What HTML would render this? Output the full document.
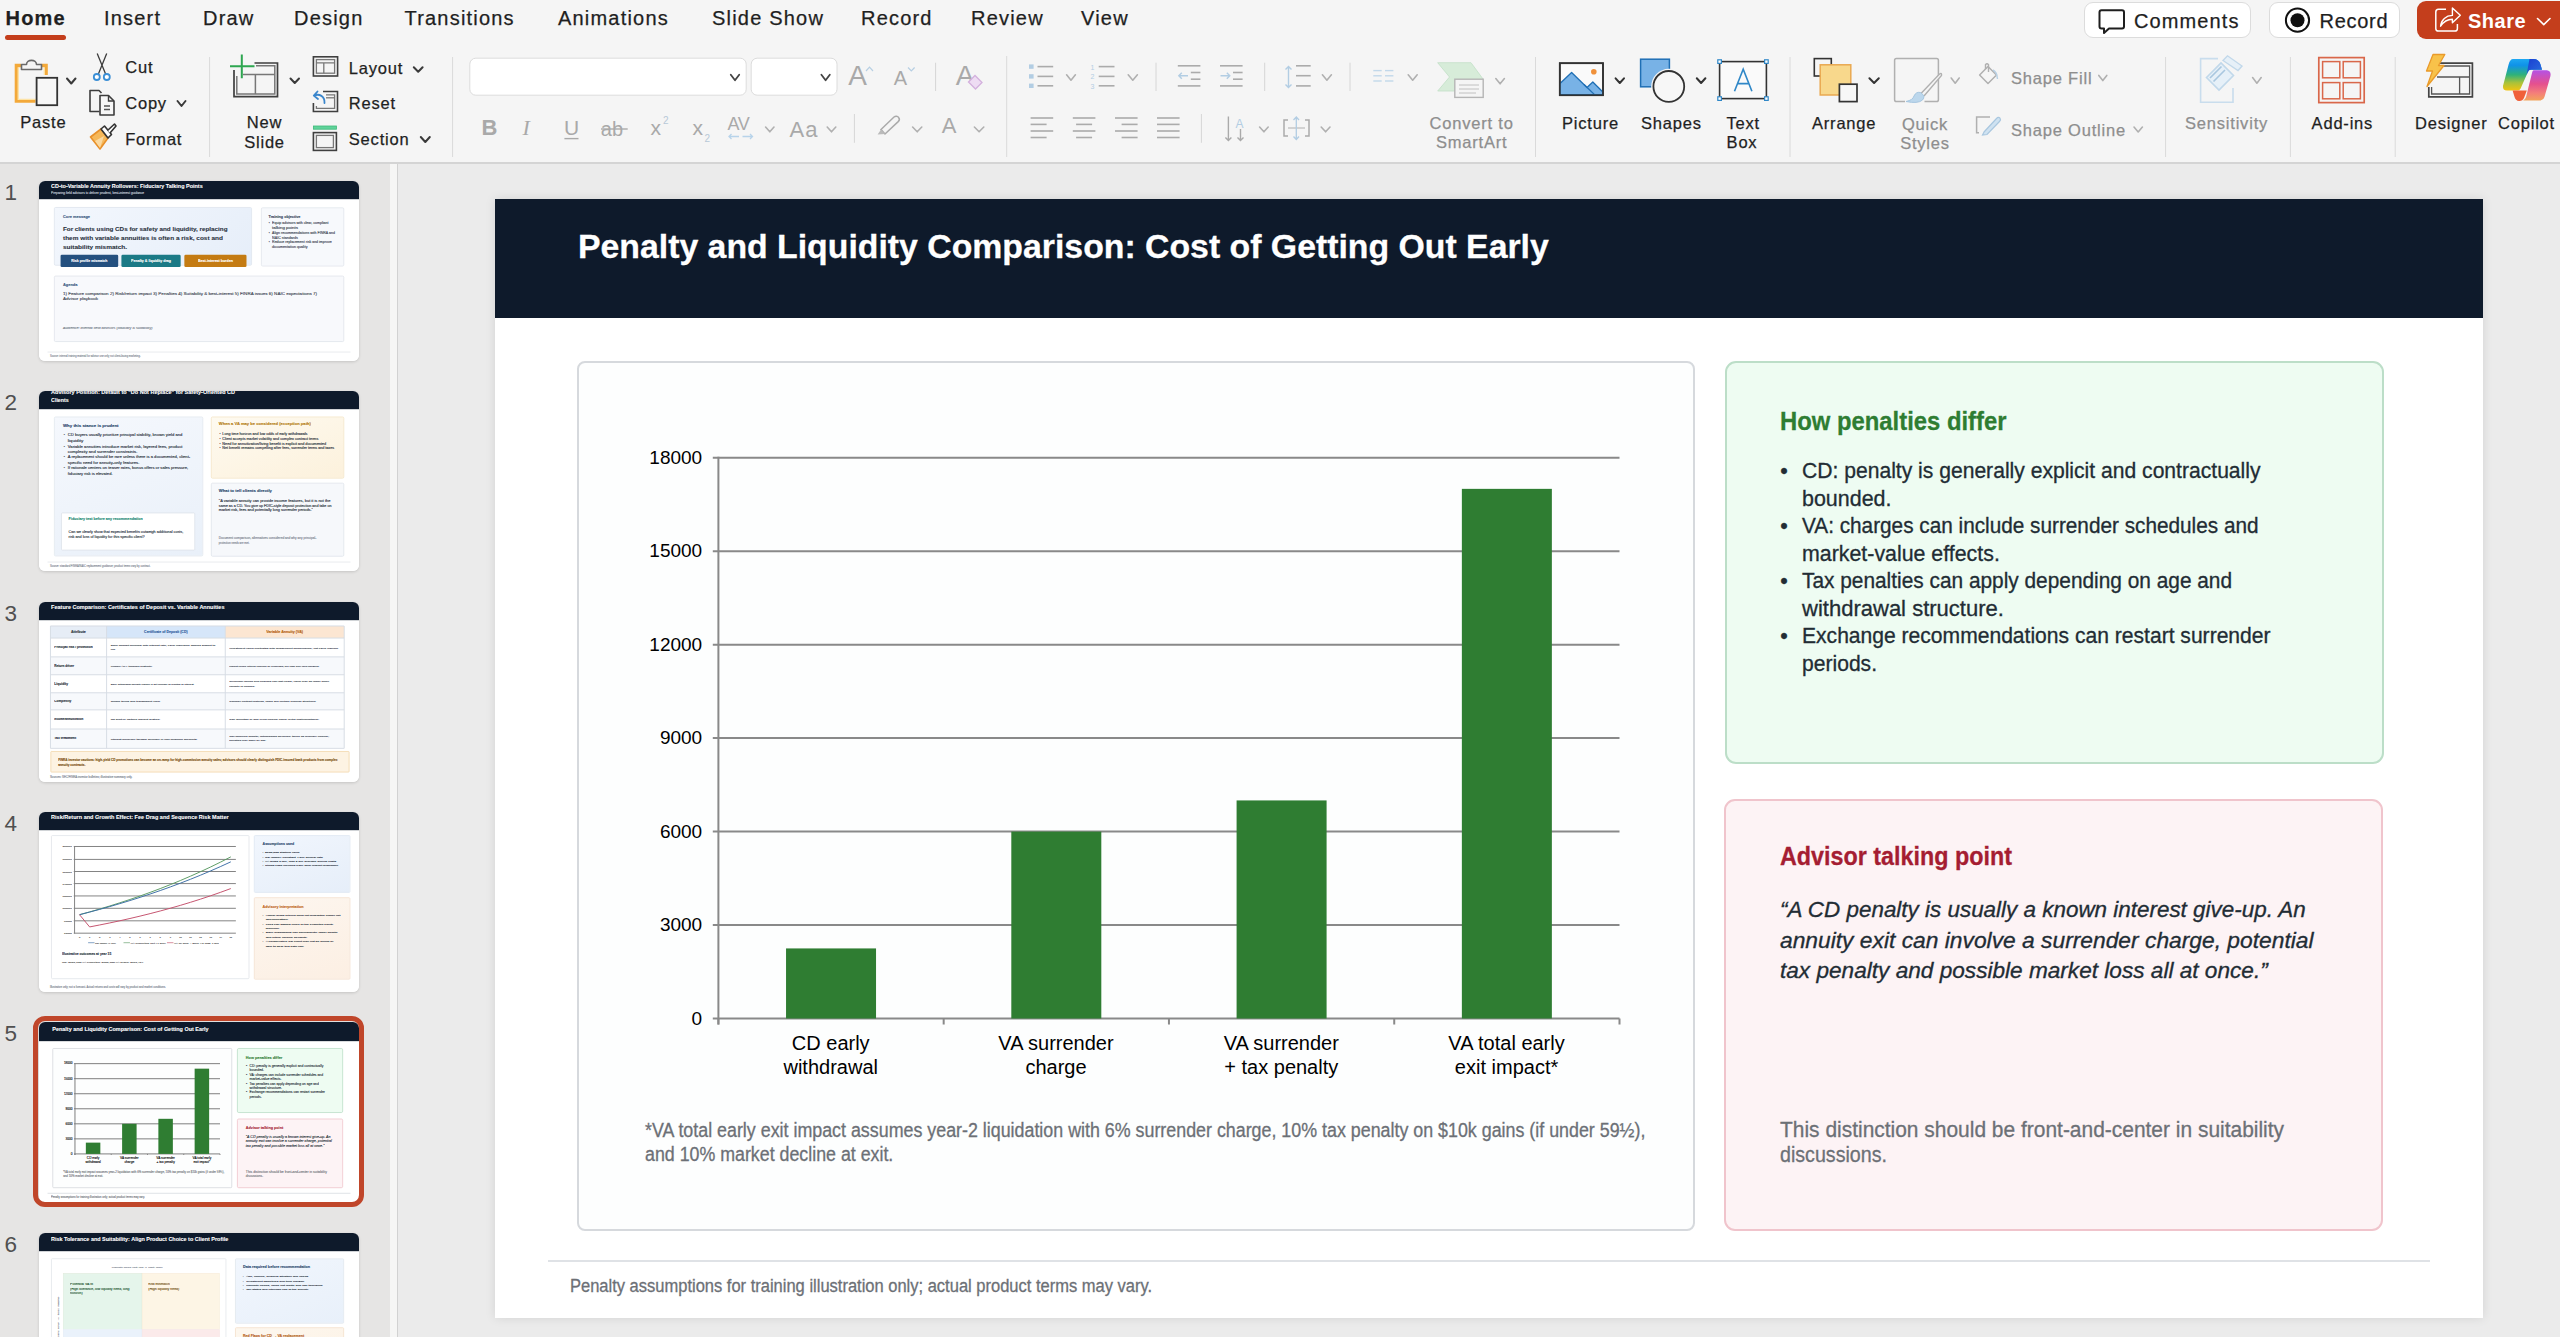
<!DOCTYPE html><html><head><meta charset="utf-8"><style>
*{margin:0;padding:0;box-sizing:content-box}
html,body{width:2560px;height:1337px;overflow:hidden;background:#ebebeb;font-family:"Liberation Sans",sans-serif}
.a{position:absolute}
.t{position:absolute;white-space:nowrap;font-family:"Liberation Sans",sans-serif}
.slide{position:absolute;width:1988px;height:1119px;background:#fff;overflow:hidden}
.th .t{-webkit-text-stroke:0.6px currentColor}
.rb{-webkit-text-stroke:0.25px currentColor}
.cal{-webkit-text-stroke:0.3px currentColor}
</style></head><body><div class="a" style="left:0px;top:0px;width:2560px;height:162px;background:#f5f5f5;"></div><div class="a" style="left:0px;top:162px;width:2560px;height:1.5px;background:#d4d4d4;"></div><div class="t rb" style="left:5.50px;top:7.87px;font-size:20px;line-height:20px;color:#1f1f1f;font-weight:700;letter-spacing:1.2px;">Home</div><div class="t rb" style="left:104.00px;top:7.87px;font-size:20px;line-height:20px;color:#1f1f1f;letter-spacing:1.2px;">Insert</div><div class="t rb" style="left:203.00px;top:7.87px;font-size:20px;line-height:20px;color:#1f1f1f;letter-spacing:1.2px;">Draw</div><div class="t rb" style="left:294.00px;top:7.87px;font-size:20px;line-height:20px;color:#1f1f1f;letter-spacing:1.2px;">Design</div><div class="t rb" style="left:404.50px;top:7.87px;font-size:20px;line-height:20px;color:#1f1f1f;letter-spacing:1.2px;">Transitions</div><div class="t rb" style="left:558.00px;top:7.87px;font-size:20px;line-height:20px;color:#1f1f1f;letter-spacing:1.2px;">Animations</div><div class="t rb" style="left:712.00px;top:7.87px;font-size:20px;line-height:20px;color:#1f1f1f;letter-spacing:1.2px;">Slide Show</div><div class="t rb" style="left:861.00px;top:7.87px;font-size:20px;line-height:20px;color:#1f1f1f;letter-spacing:1.2px;">Record</div><div class="t rb" style="left:971.00px;top:7.87px;font-size:20px;line-height:20px;color:#1f1f1f;letter-spacing:1.2px;">Review</div><div class="t rb" style="left:1081.00px;top:7.87px;font-size:20px;line-height:20px;color:#1f1f1f;letter-spacing:1.2px;">View</div><div class="a" style="left:5px;top:35px;width:61px;height:4.5px;background:#c43e1c;border-radius:3px;"></div><div class="t rb" style="left:20.20px;top:114.43px;font-size:16.5px;line-height:16.5px;color:#1f1f1f;letter-spacing:0.8px;">Paste</div><div class="t rb" style="left:125.20px;top:59.43px;font-size:16.5px;line-height:16.5px;color:#1f1f1f;letter-spacing:0.8px;">Cut</div><div class="t rb" style="left:125.20px;top:94.73px;font-size:16.5px;line-height:16.5px;color:#1f1f1f;letter-spacing:0.8px;">Copy</div><div class="t rb" style="left:125.20px;top:130.83px;font-size:16.5px;line-height:16.5px;color:#1f1f1f;letter-spacing:0.8px;">Format</div><div class="t rb" style="left:348.80px;top:59.63px;font-size:16.5px;line-height:16.5px;color:#1f1f1f;letter-spacing:0.8px;">Layout</div><div class="t rb" style="left:348.80px;top:95.03px;font-size:16.5px;line-height:16.5px;color:#1f1f1f;letter-spacing:0.8px;">Reset</div><div class="t rb" style="left:348.80px;top:131.03px;font-size:16.5px;line-height:16.5px;color:#1f1f1f;letter-spacing:0.8px;">Section</div><div class="t rb" style="left:1562.00px;top:115.03px;font-size:16.5px;line-height:16.5px;color:#1f1f1f;letter-spacing:0.8px;">Picture</div><div class="t rb" style="left:1641.00px;top:115.03px;font-size:16.5px;line-height:16.5px;color:#1f1f1f;letter-spacing:0.8px;">Shapes</div><div class="t rb" style="left:1726.50px;top:115.03px;font-size:16.5px;line-height:16.5px;color:#1f1f1f;letter-spacing:0.8px;">Text</div><div class="t rb" style="left:1812.00px;top:115.03px;font-size:16.5px;line-height:16.5px;color:#1f1f1f;letter-spacing:0.8px;">Arrange</div><div class="t rb" style="left:2311.60px;top:115.03px;font-size:16.5px;line-height:16.5px;color:#1f1f1f;letter-spacing:0.8px;">Add-ins</div><div class="t rb" style="left:2415.00px;top:115.03px;font-size:16.5px;line-height:16.5px;color:#1f1f1f;letter-spacing:0.8px;">Designer</div><div class="t rb" style="left:2498.00px;top:115.03px;font-size:16.5px;line-height:16.5px;color:#1f1f1f;letter-spacing:0.8px;">Copilot</div><div class="t rb" style="left:264.50px;top:114.33px;font-size:16.5px;line-height:16.5px;color:#1f1f1f;letter-spacing:0.8px;transform:translateX(-50%);">New</div><div class="t rb" style="left:264.50px;top:133.63px;font-size:16.5px;line-height:16.5px;color:#1f1f1f;letter-spacing:0.8px;transform:translateX(-50%);">Slide</div><div class="t rb" style="left:1742.00px;top:134.03px;font-size:16.5px;line-height:16.5px;color:#1f1f1f;letter-spacing:0.8px;transform:translateX(-50%);">Box</div><div class="t rb" style="left:1429.50px;top:115.03px;font-size:16.5px;line-height:16.5px;color:#8e8e8e;letter-spacing:0.8px;">Convert to</div><div class="t rb" style="left:1436.00px;top:134.03px;font-size:16.5px;line-height:16.5px;color:#8e8e8e;letter-spacing:0.8px;">SmartArt</div><div class="t rb" style="left:2185.00px;top:115.03px;font-size:16.5px;line-height:16.5px;color:#8e8e8e;letter-spacing:0.8px;">Sensitivity</div><div class="t rb" style="left:2011.00px;top:69.73px;font-size:16.5px;line-height:16.5px;color:#8e8e8e;letter-spacing:0.8px;">Shape Fill</div><div class="t rb" style="left:2011.00px;top:121.53px;font-size:16.5px;line-height:16.5px;color:#8e8e8e;letter-spacing:0.8px;">Shape Outline</div><div class="t rb" style="left:1925.00px;top:115.53px;font-size:16.5px;line-height:16.5px;color:#8e8e8e;letter-spacing:0.8px;transform:translateX(-50%);">Quick</div><div class="t rb" style="left:1925.00px;top:134.53px;font-size:16.5px;line-height:16.5px;color:#8e8e8e;letter-spacing:0.8px;transform:translateX(-50%);">Styles</div><div class="a" style="left:2084px;top:2px;width:167px;height:36px;box-sizing:border-box;border:1.5px solid #dcdcdc;border-radius:9px;background:#fff;"></div><div class="t rb" style="left:2134.00px;top:11.07px;font-size:20px;line-height:20px;color:#1f1f1f;letter-spacing:1.1px;">Comments</div><div class="a" style="left:2269px;top:2px;width:131px;height:36px;box-sizing:border-box;border:1.5px solid #dcdcdc;border-radius:9px;background:#fff;"></div><div class="t rb" style="left:2319.60px;top:11.07px;font-size:20px;line-height:20px;color:#1f1f1f;letter-spacing:0.7px;">Record</div><div class="a" style="left:2417px;top:1px;width:160px;height:38px;border-radius:9px;background:#c43e1c;"></div><div class="t " style="left:2468.00px;top:11.07px;font-size:20px;line-height:20px;color:#ffffff;font-weight:600;letter-spacing:0.5px;">Share</div><svg class="a" style="left:0;top:0" width="2560" height="162"><path d="M21,65.5 H16.5 V101 H35.5 M41.5,65.5 H46 V75" fill="none" stroke="#f3a93a" stroke-width="3.6"/><path d="M18.2,67.2 V99.3 H35.5 M44.3,67.2 V75" fill="none" stroke="#fde3a6" stroke-width="1.3"/><path d="M21.5,64.5 V69.5 H41.5 V64.5 H36.5 C36.5,59 26.5,59 26.5,64.5 Z" fill="#f5f5f5" stroke="#6a6a6a" stroke-width="1.6" stroke-linejoin="round"/><rect x="36.6" y="77.8" width="20.6" height="27.4" fill="#f7f7f7" stroke="#333" stroke-width="1.8"/><polyline points="67,78.5 71.25,83.5 75.5,78.5" fill="none" stroke="#3a3a3a" stroke-width="2" stroke-linecap="round" stroke-linejoin="round"/><path d="M98.3,74.2 L106.7,53.6 M105.7,74.2 L97.2,53.6" fill="none" stroke="#3c3c3c" stroke-width="1.3"/><circle cx="96.8" cy="77" r="3" fill="#fff" stroke="#3b8fd6" stroke-width="1.8"/><circle cx="106.8" cy="77" r="3" fill="#fff" stroke="#3b8fd6" stroke-width="1.8"/><path d="M99.5,111.5 H90 V90.5 H99 L101.5,93" fill="none" stroke="#3c3c3c" stroke-width="1.6" stroke-linejoin="round"/><path d="M100,95.5 H108.5 L114,101 V115 H100 Z" fill="#f7f7f7" stroke="#3c3c3c" stroke-width="1.6" stroke-linejoin="round"/><path d="M108.5,95.5 V101 H114" fill="none" stroke="#3c3c3c" stroke-width="1.4"/><path d="M104,106 H110 M104,109.5 H110" stroke="#555" stroke-width="1.3"/><polyline points="177.5,101 181.5,106 185.5,101" fill="none" stroke="#3a3a3a" stroke-width="2" stroke-linecap="round" stroke-linejoin="round"/><path d="M90.5,137 L101,129 L108,138 L100,149 Z" fill="#f6b85a" stroke="#e8902a" stroke-width="1.6" stroke-linejoin="round"/><path d="M95,141 L104,136 L100,148 Z" fill="#fbd9a0"/><path d="M101,129 L104.5,126 L111.5,134.5 L108,138 Z" fill="#fff" stroke="#333" stroke-width="1.6" stroke-linejoin="round"/><path d="M107.5,130.5 L114.5,124 L116,126 L110,133" fill="#fff" stroke="#333" stroke-width="1.6" stroke-linejoin="round"/><line x1="209.6" y1="57" x2="209.6" y2="157" stroke="#dadada" stroke-width="1"/><path d="M254.5,63 H277.5 V96.6 H234 V70" fill="none" stroke="#3f3f3f" stroke-width="1.7"/><path d="M256,65.8 H274.8 V94 H236.8 V76" fill="none" stroke="#777" stroke-width="1.5"/><path d="M243,74.5 H274.8 M255.4,74.5 V94" fill="none" stroke="#777" stroke-width="1.5"/><path d="M230,66.3 H254.5 M241.8,54.6 V78.2" fill="none" stroke="#2ea650" stroke-width="2"/><polyline points="290.5,78.5 294.75,83 299,78.5" fill="none" stroke="#3a3a3a" stroke-width="2" stroke-linecap="round" stroke-linejoin="round"/><rect x="313.4" y="56.8" width="24.2" height="19.2" fill="none" stroke="#3f3f3f" stroke-width="1.6"/><rect x="316.4" y="59.6" width="18.2" height="13.6" fill="none" stroke="#777" stroke-width="1.3"/><path d="M316.4,62.8 H334.6 M323.8,62.8 V73.2" stroke="#777" stroke-width="1.3"/><polyline points="413.8,67.3 418.20000000000005,71.8 422.6,67.3" fill="none" stroke="#3a3a3a" stroke-width="2" stroke-linecap="round" stroke-linejoin="round"/><path d="M323,91.5 H337.5 V111.5 H313.4 V103" fill="none" stroke="#3f3f3f" stroke-width="1.6"/><path d="M326,94.8 H334.6 V108.4 H316.4 V106" fill="none" stroke="#777" stroke-width="1.3"/><path d="M326,97.8 H334.6" stroke="#777" stroke-width="1.3"/><path d="M324.5,103 C325,96 319,93.5 314.5,95.5 M317.5,91.5 L313.8,95.6 L318,99" fill="none" stroke="#3a86cc" stroke-width="1.8" stroke-linecap="round" stroke-linejoin="round"/><rect x="313.4" y="126" width="23" height="3.2" fill="#5fd39a" stroke="#3cb878" stroke-width="0.8"/><rect x="313.4" y="132.6" width="23" height="17.8" fill="none" stroke="#3f3f3f" stroke-width="1.6"/><rect x="316.4" y="135.4" width="17" height="12.2" fill="none" stroke="#777" stroke-width="1.3"/><polyline points="420.8,137 425.3,142 429.8,137" fill="none" stroke="#3a3a3a" stroke-width="2" stroke-linecap="round" stroke-linejoin="round"/><line x1="452.6" y1="57" x2="452.6" y2="157" stroke="#dadada" stroke-width="1"/><rect x="469.8" y="58.2" width="276.4" height="37" rx="6" fill="#fff" stroke="#dcdcdc" stroke-width="1"/><polyline points="730.8,74.8 735.0,80.2 739.2,74.8" fill="none" stroke="#444" stroke-width="1.8" stroke-linecap="round" stroke-linejoin="round"/><rect x="751.2" y="58.2" width="85.8" height="37" rx="6" fill="#fff" stroke="#dcdcdc" stroke-width="1"/><polyline points="821.4,74.8 825.5999999999999,80.2 829.8,74.8" fill="none" stroke="#444" stroke-width="1.8" stroke-linecap="round" stroke-linejoin="round"/><text x="848.2" y="85" font-family="Liberation Sans" font-size="28" fill="#a9a9a9" font-weight="400" text-anchor="start" >A</text><polyline points="866,71 869.5,67.2 873,71" fill="none" stroke="#b7cfe3" stroke-width="1.2"/><text x="893.8" y="85" font-family="Liberation Sans" font-size="20" fill="#a9a9a9" font-weight="400" text-anchor="start" >A</text><polyline points="908,67.5 911.3,71 914.6,67.5" fill="none" stroke="#b7cfe3" stroke-width="1.2"/><line x1="935.6" y1="62.7" x2="935.6" y2="91" stroke="#d6d6d6" stroke-width="1"/><text x="955.8" y="85" font-family="Liberation Sans" font-size="28" fill="#a9a9a9" font-weight="400" text-anchor="start" >A</text><path d="M968.5,82 L975,75.5 L982,82.5 L975.5,89 Z" fill="#eedcf3" stroke="#d3b0dd" stroke-width="1.3"/><line x1="1006.7" y1="56" x2="1006.7" y2="157" stroke="#dadada" stroke-width="1"/><text x="481.5" y="135.4" font-family="Liberation Sans" font-size="22" fill="#a9a9a9" font-weight="700" text-anchor="start" >B</text><text x="522.5" y="135.4" font-family="Liberation Serif" font-size="22" fill="#a9a9a9" font-weight="400" font-style="italic" text-anchor="start" >I</text><text x="564" y="135.4" font-family="Liberation Sans" font-size="21" fill="#a9a9a9" font-weight="400" text-anchor="start" >U</text><line x1="564.4" y1="138.6" x2="578.5" y2="138.6" stroke="#a9a9a9" stroke-width="1.4"/><text x="600.8" y="135.6" font-family="Liberation Sans" font-size="20" fill="#a9a9a9" font-weight="400" text-anchor="start" >ab</text><line x1="601" y1="129" x2="627.7" y2="129" stroke="#a9a9a9" stroke-width="1.4"/><text x="650.5" y="135" font-family="Liberation Sans" font-size="21" fill="#a9a9a9" font-weight="400" text-anchor="start" >x</text><text x="663" y="123.8" font-family="Liberation Sans" font-size="10" fill="#b8c9d8" font-weight="400" text-anchor="start" >2</text><text x="692.5" y="135" font-family="Liberation Sans" font-size="21" fill="#a9a9a9" font-weight="400" text-anchor="start" >x</text><text x="704.5" y="141.8" font-family="Liberation Sans" font-size="10" fill="#b8c9d8" font-weight="400" text-anchor="start" >2</text><text x="727.5" y="130" font-family="Liberation Sans" font-size="18" fill="#a9a9a9" font-weight="400" text-anchor="start" letter-spacing="-0.5">AV</text><path d="M729,136.5 H739 M731.5,134 L729,136.5 L731.5,139 M742.5,136.5 H752.5 M750,134 L752.5,136.5 L750,139" fill="none" stroke="#b7d3ea" stroke-width="1.3"/><polyline points="765.6,127 769.8,131.8 774,127" fill="none" stroke="#b0b0b0" stroke-width="1.6" stroke-linecap="round" stroke-linejoin="round"/><text x="789.5" y="136.5" font-family="Liberation Sans" font-size="22" fill="#a9a9a9" font-weight="400" text-anchor="start" letter-spacing="1">Aa</text><polyline points="827.2,127 831.5,131.8 835.8,127" fill="none" stroke="#b0b0b0" stroke-width="1.6" stroke-linecap="round" stroke-linejoin="round"/><line x1="854.4" y1="114" x2="854.4" y2="142.8" stroke="#d6d6d6" stroke-width="1"/><path d="M881,129.5 L894,117 C895.5,115.8 897.5,116 898.6,117.4 C899.6,118.6 899.4,120.4 898.2,121.6 L885,134 Z" fill="none" stroke="#aaa" stroke-width="1.5"/><path d="M881,129.5 L877.6,134.5 L885,134 Z" fill="#bbb"/><polyline points="912.6,127 917.2,131.8 921.8,127" fill="none" stroke="#b0b0b0" stroke-width="1.6" stroke-linecap="round" stroke-linejoin="round"/><text x="941.8" y="133.3" font-family="Liberation Sans" font-size="22" fill="#a9a9a9" font-weight="400" text-anchor="start" >A</text><polyline points="974.4,127 979.0999999999999,131.8 983.8,127" fill="none" stroke="#b0b0b0" stroke-width="1.6" stroke-linecap="round" stroke-linejoin="round"/><rect x="1029" y="64.39999999999999" width="4.6" height="4.4" fill="#b2cde3"/><line x1="1037.5" y1="66.6" x2="1053.2" y2="66.6" stroke="#ababab" stroke-width="1.6"/><rect x="1029" y="74.2" width="4.6" height="4.4" fill="#b2cde3"/><line x1="1037.5" y1="76.4" x2="1053.2" y2="76.4" stroke="#ababab" stroke-width="1.6"/><rect x="1029" y="83.6" width="4.6" height="4.4" fill="#b2cde3"/><line x1="1037.5" y1="85.8" x2="1053.2" y2="85.8" stroke="#ababab" stroke-width="1.6"/><polyline points="1066.6,74.8 1071.0,80.2 1075.4,74.8" fill="none" stroke="#b0b0b0" stroke-width="1.6" stroke-linecap="round" stroke-linejoin="round"/><text x="1092.5" y="69.6" font-family="Liberation Sans" font-size="7" fill="#b2cde3" font-weight="400" text-anchor="middle" >1</text><line x1="1098.7" y1="66.6" x2="1114.5" y2="66.6" stroke="#ababab" stroke-width="1.6"/><text x="1092.5" y="79.4" font-family="Liberation Sans" font-size="7" fill="#b2cde3" font-weight="400" text-anchor="middle" >2</text><line x1="1098.7" y1="76.4" x2="1114.5" y2="76.4" stroke="#ababab" stroke-width="1.6"/><text x="1092.5" y="88.8" font-family="Liberation Sans" font-size="7" fill="#b2cde3" font-weight="400" text-anchor="middle" >3</text><line x1="1098.7" y1="85.8" x2="1114.5" y2="85.8" stroke="#ababab" stroke-width="1.6"/><polyline points="1128.2,74.8 1132.8000000000002,80.2 1137.4,74.8" fill="none" stroke="#b0b0b0" stroke-width="1.6" stroke-linecap="round" stroke-linejoin="round"/><line x1="1156" y1="62.7" x2="1156" y2="91" stroke="#d6d6d6" stroke-width="1"/><line x1="1177.8" y1="65.8" x2="1200.3999999999999" y2="65.8" stroke="#ababab" stroke-width="1.6"/><line x1="1190.8" y1="72.5" x2="1200.3999999999999" y2="72.5" stroke="#ababab" stroke-width="1.6"/><line x1="1190.8" y1="79.2" x2="1200.3999999999999" y2="79.2" stroke="#ababab" stroke-width="1.6"/><line x1="1177.8" y1="85.9" x2="1200.3999999999999" y2="85.9" stroke="#ababab" stroke-width="1.6"/><line x1="1220" y1="65.8" x2="1242.6" y2="65.8" stroke="#ababab" stroke-width="1.6"/><line x1="1233" y1="72.5" x2="1242.6" y2="72.5" stroke="#ababab" stroke-width="1.6"/><line x1="1233" y1="79.2" x2="1242.6" y2="79.2" stroke="#ababab" stroke-width="1.6"/><line x1="1220" y1="85.9" x2="1242.6" y2="85.9" stroke="#ababab" stroke-width="1.6"/><path d="M1188,75.8 H1178.8 M1181.8,72.8 L1178.8,75.8 L1181.8,78.8" fill="none" stroke="#b2cde3" stroke-width="1.4"/><path d="M1220.5,75.8 H1229.8 M1226.8,72.8 L1229.8,75.8 L1226.8,78.8" fill="none" stroke="#b2cde3" stroke-width="1.4"/><line x1="1264.7" y1="62.7" x2="1264.7" y2="91" stroke="#d6d6d6" stroke-width="1"/><path d="M1288.5,66.5 V87.5 M1285.5,69.5 L1288.5,66.5 L1291.5,69.5 M1285.5,84.5 L1288.5,87.5 L1291.5,84.5" fill="none" stroke="#b2cde3" stroke-width="1.4"/><line x1="1296" y1="65.8" x2="1310.7" y2="65.8" stroke="#ababab" stroke-width="1.6"/><line x1="1296" y1="75.7" x2="1310.7" y2="75.7" stroke="#ababab" stroke-width="1.6"/><line x1="1296" y1="85.9" x2="1310.7" y2="85.9" stroke="#ababab" stroke-width="1.6"/><polyline points="1322.4,74.8 1326.9,80.2 1331.4,74.8" fill="none" stroke="#b0b0b0" stroke-width="1.6" stroke-linecap="round" stroke-linejoin="round"/><line x1="1350" y1="62.7" x2="1350" y2="91" stroke="#d6d6d6" stroke-width="1"/><line x1="1373.3" y1="70.6" x2="1381.7" y2="70.6" stroke="#c2d8ea" stroke-width="1.4"/><line x1="1373.3" y1="75.8" x2="1381.7" y2="75.8" stroke="#c2d8ea" stroke-width="1.4"/><line x1="1373.3" y1="81" x2="1381.7" y2="81" stroke="#c2d8ea" stroke-width="1.4"/><line x1="1385" y1="70.6" x2="1393.4" y2="70.6" stroke="#c2d8ea" stroke-width="1.4"/><line x1="1385" y1="75.8" x2="1393.4" y2="75.8" stroke="#c2d8ea" stroke-width="1.4"/><line x1="1385" y1="81" x2="1393.4" y2="81" stroke="#c2d8ea" stroke-width="1.4"/><polyline points="1408.2,74.8 1412.7,80.2 1417.2,74.8" fill="none" stroke="#b0b0b0" stroke-width="1.6" stroke-linecap="round" stroke-linejoin="round"/><path d="M1437.7,62.7 H1471 L1483,79 L1471,91 H1437.7 L1449.5,77 Z" fill="#d7ecd9" stroke="#c2e0c6" stroke-width="0.8"/><rect x="1454.8" y="79.2" width="28.4" height="18.2" fill="#f5f5f5" stroke="#b5b5b5" stroke-width="1.4"/><path d="M1459,85 H1479 M1459,89 H1479 M1459,93 H1476" stroke="#c0c0c0" stroke-width="1"/><polyline points="1495.8,78.5 1500.1,83.8 1504.4,78.5" fill="none" stroke="#b0b0b0" stroke-width="1.6" stroke-linecap="round" stroke-linejoin="round"/><line x1="1030.6" y1="118" x2="1053.1999999999998" y2="118" stroke="#ababab" stroke-width="1.6"/><line x1="1030.6" y1="124.4" x2="1046.6" y2="124.4" stroke="#ababab" stroke-width="1.6"/><line x1="1030.6" y1="131" x2="1053.1999999999998" y2="131" stroke="#ababab" stroke-width="1.6"/><line x1="1030.6" y1="137.5" x2="1046.6" y2="137.5" stroke="#ababab" stroke-width="1.6"/><line x1="1072.8" y1="118" x2="1095.3999999999999" y2="118" stroke="#ababab" stroke-width="1.6"/><line x1="1076.1" y1="124.4" x2="1092.1" y2="124.4" stroke="#ababab" stroke-width="1.6"/><line x1="1072.8" y1="131" x2="1095.3999999999999" y2="131" stroke="#ababab" stroke-width="1.6"/><line x1="1076.1" y1="137.5" x2="1092.1" y2="137.5" stroke="#ababab" stroke-width="1.6"/><line x1="1115" y1="118" x2="1137.6" y2="118" stroke="#ababab" stroke-width="1.6"/><line x1="1121.6" y1="124.4" x2="1137.6" y2="124.4" stroke="#ababab" stroke-width="1.6"/><line x1="1115" y1="131" x2="1137.6" y2="131" stroke="#ababab" stroke-width="1.6"/><line x1="1121.6" y1="137.5" x2="1137.6" y2="137.5" stroke="#ababab" stroke-width="1.6"/><line x1="1157" y1="118" x2="1179.6" y2="118" stroke="#ababab" stroke-width="1.6"/><line x1="1157" y1="124.4" x2="1179.6" y2="124.4" stroke="#ababab" stroke-width="1.6"/><line x1="1157" y1="131" x2="1179.6" y2="131" stroke="#ababab" stroke-width="1.6"/><line x1="1157" y1="137.5" x2="1179.6" y2="137.5" stroke="#ababab" stroke-width="1.6"/><line x1="1201.4" y1="114" x2="1201.4" y2="142.8" stroke="#d6d6d6" stroke-width="1"/><path d="M1228.4,116.5 V140.5 M1225.4,137.5 L1228.4,140.5 L1231.4,137.5 M1240.5,129 V140.5 M1237.5,137.5 L1240.5,140.5 L1243.5,137.5" fill="none" stroke="#aaa" stroke-width="1.4"/><text x="1235.6" y="128" font-family="Liberation Sans" font-size="12" fill="#b2cde3" font-weight="400" text-anchor="start" >A</text><polyline points="1259.6,127 1263.9,131.8 1268.2,127" fill="none" stroke="#b0b0b0" stroke-width="1.6" stroke-linecap="round" stroke-linejoin="round"/><path d="M1288,120 H1284 V136 H1288 M1305,120 H1309 V136 H1305" fill="none" stroke="#aaa" stroke-width="1.5"/><line x1="1288" y1="128" x2="1305" y2="128" stroke="#bbb" stroke-width="1.2"/><path d="M1296.3,117 V139.5 M1293.5,120 L1296.3,117 L1299,120 M1293.5,136.5 L1296.3,139.5 L1299,136.5" fill="none" stroke="#b2cde3" stroke-width="1.3"/><polyline points="1321.2,127 1325.6,131.8 1330,127" fill="none" stroke="#b0b0b0" stroke-width="1.6" stroke-linecap="round" stroke-linejoin="round"/><line x1="1535.5" y1="57" x2="1535.5" y2="157" stroke="#dadada" stroke-width="1"/><rect x="1559.8" y="63.2" width="43.2" height="32" fill="#fafafa" stroke="#333" stroke-width="1.7"/><path d="M1560,83.5 L1571.6,72.5 L1587,87.5 L1592.8,82 L1602.6,91.8 V94.6 H1560 Z" fill="#78b2e6" stroke="#1f6fb5" stroke-width="1.3" stroke-linejoin="round"/><path d="M1584,84.5 L1594.5,94.6" stroke="#1f6fb5" stroke-width="1.3"/><rect x="1559.8" y="63.2" width="43.2" height="32" fill="none" stroke="#333" stroke-width="1.7"/><circle cx="1593.8" cy="71.8" r="2.8" fill="#f0913a"/><polyline points="1615.6,78.3 1619.8,83 1624,78.3" fill="none" stroke="#333" stroke-width="2" stroke-linecap="round" stroke-linejoin="round"/><rect x="1640.6" y="59.2" width="28.8" height="27.6" fill="#78b2e6" stroke="#1f6fb5" stroke-width="1.5"/><circle cx="1668.8" cy="86.4" r="17.6" fill="#f5f5f5"/><circle cx="1668.8" cy="86.4" r="15.4" fill="#f7f7f7" stroke="#333" stroke-width="1.8"/><polyline points="1696.8,78.3 1701.1,83 1705.4,78.3" fill="none" stroke="#333" stroke-width="2" stroke-linecap="round" stroke-linejoin="round"/><rect x="1719.6" y="61.6" width="46.8" height="37" fill="#fafafa" stroke="#333" stroke-width="1.6"/><rect x="1717.8" y="59.800000000000004" width="3.6" height="3.6" fill="#fff" stroke="#2f87c7" stroke-width="1.2"/><rect x="1764.6000000000001" y="59.800000000000004" width="3.6" height="3.6" fill="#fff" stroke="#2f87c7" stroke-width="1.2"/><rect x="1717.8" y="96.8" width="3.6" height="3.6" fill="#fff" stroke="#2f87c7" stroke-width="1.2"/><rect x="1764.6000000000001" y="96.8" width="3.6" height="3.6" fill="#fff" stroke="#2f87c7" stroke-width="1.2"/><path d="M1734.5,91.2 L1743.2,69.2 L1751.9,91.2 M1737.6,83.6 H1748.8" fill="none" stroke="#2f87c7" stroke-width="1.6"/><line x1="1790" y1="57" x2="1790" y2="157" stroke="#dadada" stroke-width="1"/><rect x="1814.3" y="58.6" width="17" height="17.4" fill="#f5f5f5" stroke="#333" stroke-width="1.6"/><rect x="1820.2" y="64.8" width="30.6" height="30.2" fill="#f8d88c" stroke="#e9a850" stroke-width="1.5"/><rect x="1839.4" y="84.2" width="17.6" height="17.4" fill="#f7f7f7" stroke="#333" stroke-width="1.7"/><polyline points="1869.4,78.3 1874.1,83 1878.8,78.3" fill="none" stroke="#333" stroke-width="2" stroke-linecap="round" stroke-linejoin="round"/><path d="M1905,101.6 H1896.4 Q1894.6,101.6 1894.6,99.8 V60.2 Q1894.6,58.4 1896.4,58.4 H1936.6 Q1938.4,58.4 1938.4,60.2 V99.8 Q1938.4,101.6 1936.6,101.6 H1924.5" fill="none" stroke="#b0b0b0" stroke-width="1.5"/><path d="M1921,93.5 L1939.5,74 Q1942,72.5 1941.5,75.5 L1924,96" fill="#f5f5f5" stroke="#b0b0b0" stroke-width="1.4"/><path d="M1920.5,92.5 Q1926,96 1922.5,100 Q1918,104 1906,101.5 Q1913,100 1914,96 Q1916,91.5 1920.5,92.5 Z" fill="#bcd7ec" stroke="#a6c6e0" stroke-width="1"/><polyline points="1951.2,78 1955.2,83.2 1959.2,78" fill="none" stroke="#b0b0b0" stroke-width="1.6" stroke-linecap="round" stroke-linejoin="round"/><path d="M1979.6,75 L1988,66.5 L1996.5,75 L1988,83.5 Z" fill="none" stroke="#b0b0b0" stroke-width="1.5" stroke-linejoin="round"/><path d="M1985.5,69 V64.6 Q1987,62.8 1988.5,64.6 V72" fill="none" stroke="#b0b0b0" stroke-width="1.4"/><path d="M1993,70 Q1997,72 1997.5,79" fill="none" stroke="#b8d0e4" stroke-width="1.4"/><polyline points="2098.8,75.4 2102.8,80.6 2106.8,75.4" fill="none" stroke="#b0b0b0" stroke-width="1.6" stroke-linecap="round" stroke-linejoin="round"/><path d="M1979,132.8 H1976.6 V117 H1990" fill="none" stroke="#b0b0b0" stroke-width="1.5"/><path d="M1984,132 L1996.5,118.5 Q1998.5,116.5 2000,118.2 Q2001.2,119.8 1999.5,121.5 L1987,134.5 L1982.5,135 Z" fill="#cfe2f1" stroke="#a9c7df" stroke-width="1.2"/><polyline points="2134,127 2138.2,132 2142.4,127" fill="none" stroke="#b0b0b0" stroke-width="1.6" stroke-linecap="round" stroke-linejoin="round"/><line x1="2165.6" y1="57" x2="2165.6" y2="157" stroke="#dadada" stroke-width="1"/><path d="M2218,58.6 H2200.6 V102.2 H2233 V88" fill="none" stroke="#c9dded" stroke-width="1.6"/><path d="M2206.5,77.5 L2221,63 L2233.5,75.5 L2219,90 Z" fill="#e6f0f8" stroke="#c1d8ea" stroke-width="1.6"/><path d="M2210,78 L2221.5,66.5 M2213.5,81.5 L2225,70" stroke="#a9c7df" stroke-width="1.6"/><path d="M2223,60.5 L2227.5,55.8 L2242,66 L2238,70.5 Z" fill="#e6f0f8" stroke="#c1d8ea" stroke-width="1.4"/><polyline points="2252.6,77.6 2256.8999999999996,83.2 2261.2,77.6" fill="none" stroke="#b0b0b0" stroke-width="1.6" stroke-linecap="round" stroke-linejoin="round"/><line x1="2290.4" y1="57" x2="2290.4" y2="157" stroke="#dadada" stroke-width="1"/><rect x="2318.8" y="57.6" width="45.4" height="45" fill="none" stroke="#d9674a" stroke-width="1.7"/><rect x="2322.6" y="61.6" width="17.2" height="16.2" fill="none" stroke="#d9674a" stroke-width="1.5"/><rect x="2322.6" y="82.6" width="17.2" height="16.2" fill="none" stroke="#d9674a" stroke-width="1.5"/><rect x="2343.2" y="61.6" width="17.2" height="16.2" fill="none" stroke="#d9674a" stroke-width="1.5"/><rect x="2343.2" y="82.6" width="17.2" height="16.2" fill="none" stroke="#d9674a" stroke-width="1.5"/><line x1="2395.2" y1="57" x2="2395.2" y2="157" stroke="#dadada" stroke-width="1"/><path d="M2440,63.2 H2472.4 V96.8 H2428.8 V87" fill="none" stroke="#444" stroke-width="1.7"/><path d="M2442.5,66 H2469.6 V94 H2431.6 V87" fill="none" stroke="#555" stroke-width="1.3"/><path d="M2437,77 H2469.6 M2459.6,77 V94" fill="none" stroke="#555" stroke-width="1.3"/><path d="M2433,54.5 H2444.8 L2438.5,65.5 H2444 L2427,86.5 L2432.5,71 H2426.5 Z" fill="#f8c24a" stroke="#e99a2a" stroke-width="1.3" stroke-linejoin="round"/><defs>
<linearGradient id="cpA" x1="0" y1="0" x2="0" y2="1"><stop offset="0" stop-color="#1ea8f2"/><stop offset="0.2" stop-color="#0f92e8"/><stop offset="0.5" stop-color="#2fb27a"/><stop offset="0.75" stop-color="#a9c23a"/><stop offset="1" stop-color="#f2c410"/></linearGradient>
<linearGradient id="cpB" x1="0" y1="0" x2="0" y2="1"><stop offset="0" stop-color="#b452e6"/><stop offset="0.45" stop-color="#e5508e"/><stop offset="0.75" stop-color="#f47e7a"/><stop offset="1" stop-color="#f2a45a"/></linearGradient>
<linearGradient id="cpC" x1="0" y1="0" x2="1" y2="1"><stop offset="0" stop-color="#1a3fd0"/><stop offset="1" stop-color="#2a6fe0"/></linearGradient>
</defs><path d="M2513,59 H2533.5 Q2539,59 2540.5,64.5 L2542,69.8 H2531 Q2528.6,69.8 2527.8,72.2 L2520.6,88.4 Q2519.6,90.6 2517,90.6 H2507 Q2502.6,90.6 2503,86 L2508.6,64.5 Q2510,59 2513,59 Z" fill="url(#cpA)"/><path d="M2529.5,59 H2533.5 Q2539,59 2540.5,64.5 L2542,69.8 H2531 Q2528.6,69.8 2527.8,72.2 L2526.5,75 Z" fill="url(#cpC)"/><path d="M2512.6,90.6 H2526.8 L2524,98 Q2522.6,101.2 2519,101 Q2515.6,100.8 2514.4,96.5 Z" fill="#f0603a"/><path d="M2533.5,70.2 H2546.8 Q2551.4,70.6 2550.4,76.2 L2544.6,96.6 Q2543.4,100.6 2539.4,100.6 H2522.2 Q2525.2,100 2526.2,96.4 L2532,73 Q2532.6,70.2 2533.5,70.2 Z" fill="url(#cpB)"/><path d="M2101.5,10.2 H2122 Q2124,10.2 2124,12.2 V26.5 Q2124,28.5 2122,28.5 H2109 L2104,33 V28.5 H2101.5 Q2099.5,28.5 2099.5,26.5 V12.2 Q2099.5,10.2 2101.5,10.2 Z" fill="none" stroke="#1f1f1f" stroke-width="2" stroke-linejoin="round"/><circle cx="2297.5" cy="20.2" r="11.6" fill="none" stroke="#111" stroke-width="2"/><circle cx="2297.5" cy="20.2" r="7" fill="#111"/><path d="M2446,9.2 H2438.5 Q2435.8,9.2 2435.8,12 V28.4 Q2435.8,31.1 2438.5,31.1 H2454.8 Q2457.4,31.1 2457.4,28.4 V24" fill="none" stroke="#fff" stroke-width="1.5" stroke-linejoin="round"/><path d="M2440.6,26.2 C2441.2,19.6 2446,15.6 2452.4,15.4 V8 L2460.3,15.3 L2452.4,22.7 V19.2 C2447.4,19.2 2443.4,21.8 2440.6,26.2 Z" fill="none" stroke="#fff" stroke-width="1.4" stroke-linejoin="round"/><polyline points="2537.5,18.5 2543.75,24.6 2550,18.5" fill="none" stroke="#fff" stroke-width="1.6" stroke-linecap="round" stroke-linejoin="round"/></svg><div class="a" style="left:0px;top:163.5px;width:389.5px;height:1174px;background:#e6e5e4;"></div><div class="a" style="left:389.5px;top:163.5px;width:7.5px;height:1174px;background:#f6f6f5;"></div><div class="a" style="left:397px;top:163.5px;width:1.2px;height:1174px;background:#d2d2d2;"></div><div class="t " style="left:4.50px;top:181.75px;font-size:22.5px;line-height:22.5px;color:#505050;">1</div><div class="a" style="left:38.5px;top:180.5px;width:320px;height:180px;border-radius:6px;overflow:hidden;background:#fff;box-shadow:0 1px 3px rgba(0,0,0,0.15)"><div class="slide th" style="left:0;top:0;transform:scale(0.16097);transform-origin:0 0"><div class="a" style="left:0px;top:0px;width:1988px;height:113px;background:#0e1a2b;"></div><div class="t " style="left:75.00px;top:17.22px;font-size:34px;line-height:34px;color:#fff;font-weight:700;transform-origin:0 0;transform:scaleX(0.9973);">CD-to-Variable Annuity Rollovers: Fiduciary Talking Points</div><div class="t " style="left:75.00px;top:66.61px;font-size:17px;line-height:17px;color:#c9d2de;transform-origin:0 0;transform:scaleX(1.1786);">Preparing field advisors to deliver prudent, best-interest guidance</div><div class="a" style="left:93px;top:162px;width:1230px;height:364px;box-sizing:border-box;background:linear-gradient(135deg,#f3f7fd,#e6eef9);border:5px solid #dce4ee;border-radius:10px;"></div><div class="t " style="left:148.50px;top:209.38px;font-size:22px;line-height:22px;color:#3b5a82;font-weight:700;transform-origin:0 0;transform:scaleX(1.1170);">Core message</div><div class="t " style="left:148.50px;top:277.83px;font-size:38px;line-height:38px;color:#2a323d;font-weight:700;transform-origin:0 0;transform:scaleX(1.0285);">For clients using CDs for safety and liquidity, replacing</div><div class="t " style="left:148.50px;top:333.83px;font-size:38px;line-height:38px;color:#2a323d;font-weight:700;transform-origin:0 0;transform:scaleX(1.0545);">them with variable annuities is often a risk, cost and</div><div class="t " style="left:148.50px;top:389.83px;font-size:38px;line-height:38px;color:#2a323d;font-weight:700;transform-origin:0 0;transform:scaleX(1.0589);">suitability mismatch.</div><div class="a" style="left:134px;top:458px;width:358px;height:77px;background:#24507f;border-radius:8px;"></div><div class="t " style="left:201.00px;top:488.76px;font-size:18px;line-height:18px;color:#fff;font-weight:700;transform-origin:0 0;transform:scaleX(1.1976);">Risk profile mismatch</div><div class="a" style="left:512px;top:458px;width:368px;height:77px;background:#1b7a86;border-radius:8px;"></div><div class="t " style="left:572.00px;top:488.76px;font-size:18px;line-height:18px;color:#fff;font-weight:700;transform-origin:0 0;transform:scaleX(1.2399);">Penalty &amp; liquidity drag</div><div class="a" style="left:903px;top:458px;width:386px;height:77px;background:#c47b12;border-radius:8px;"></div><div class="t " style="left:988.00px;top:488.76px;font-size:18px;line-height:18px;color:#fff;font-weight:700;transform-origin:0 0;transform:scaleX(1.2272);">Best-interest burden</div><div class="a" style="left:1379px;top:164px;width:517px;height:367px;box-sizing:border-box;background:#f7f9fc;border:5px solid #e2e6ec;border-radius:10px;"></div><div class="t " style="left:1426.00px;top:211.07px;font-size:20px;line-height:20px;color:#3b4a5e;font-weight:700;transform-origin:0 0;transform:scaleX(1.1645);">Training objective</div><div class="t " style="left:1428.00px;top:254.76px;font-size:18px;line-height:18px;color:#3a4350;">•</div><div class="t " style="left:1448.00px;top:254.76px;font-size:18px;line-height:18px;color:#3a4350;transform-origin:0 0;transform:scaleX(1.2276);">Equip advisors with clear, compliant</div><div class="t " style="left:1448.00px;top:284.26px;font-size:18px;line-height:18px;color:#3a4350;transform-origin:0 0;transform:scaleX(1.5230);">talking points</div><div class="t " style="left:1428.00px;top:313.76px;font-size:18px;line-height:18px;color:#3a4350;">•</div><div class="t " style="left:1448.00px;top:313.76px;font-size:18px;line-height:18px;color:#3a4350;transform-origin:0 0;transform:scaleX(1.2259);">Align recommendations with FINRA and</div><div class="t " style="left:1448.00px;top:343.26px;font-size:18px;line-height:18px;color:#3a4350;transform-origin:0 0;transform:scaleX(1.2594);">NAIC standards</div><div class="t " style="left:1428.00px;top:372.76px;font-size:18px;line-height:18px;color:#3a4350;">•</div><div class="t " style="left:1448.00px;top:372.76px;font-size:18px;line-height:18px;color:#3a4350;transform-origin:0 0;transform:scaleX(1.2206);">Reduce replacement risk and improve</div><div class="t " style="left:1448.00px;top:402.26px;font-size:18px;line-height:18px;color:#3a4350;transform-origin:0 0;transform:scaleX(1.2564);">documentation quality</div><div class="a" style="left:93px;top:588px;width:1803px;height:412px;box-sizing:border-box;background:#f8f9fc;border:5px solid #e0e4ea;border-radius:10px;"></div><div class="t " style="left:148.50px;top:633.38px;font-size:22px;line-height:22px;color:#3b5a82;font-weight:700;transform-origin:0 0;transform:scaleX(1.1157);">Agenda</div><div class="t " style="left:148.50px;top:689.38px;font-size:22px;line-height:22px;color:#3a4350;transform-origin:0 0;transform:scaleX(1.2817);">1) Feature comparison  2) Risk/return impact  3) Penalties  4) Suitability &amp; best-interest  5) FINRA issues  6) NAIC expectations  7)</div><div class="t " style="left:148.50px;top:723.38px;font-size:22px;line-height:22px;color:#3a4350;transform-origin:0 0;transform:scaleX(1.3013);">Advisor playbook</div><div class="t " style="left:148.50px;top:907.61px;font-size:17px;line-height:17px;color:#7a828e;font-style:italic;transform-origin:0 0;transform:scaleX(1.3559);">Audience: internal field advisors (fiduciary &amp; suitability)</div><div class="a" style="left:53px;top:1060px;width:1882px;height:5px;background:#e3e6ea;"></div><div class="t " style="left:68.00px;top:1076.76px;font-size:18px;line-height:18px;color:#7a828e;transform-origin:0 0;transform:scaleX(0.8725);">Source: internal training material for advisor use only; not client-facing marketing.</div></div></div><div class="t " style="left:4.50px;top:392.25px;font-size:22.5px;line-height:22.5px;color:#505050;">2</div><div class="a" style="left:38.5px;top:391px;width:320px;height:180px;border-radius:6px;overflow:hidden;background:#fff;box-shadow:0 1px 3px rgba(0,0,0,0.15)"><div class="slide th" style="left:0;top:0;transform:scale(0.16097);transform-origin:0 0"><div class="a" style="left:0px;top:0px;width:1988px;height:113px;background:#0e1a2b;"></div><div class="t " style="left:75.00px;top:-8.78px;font-size:34px;line-height:34px;color:#fff;font-weight:700;transform-origin:0 0;transform:scaleX(1.0067);">Advisory Position: Default to "Do Not Replace" for Safety-Oriented CD</div><div class="t " style="left:75.00px;top:41.22px;font-size:34px;line-height:34px;color:#fff;font-weight:700;transform-origin:0 0;transform:scaleX(0.9705);">Clients</div><div class="a" style="left:93px;top:159px;width:927px;height:868px;box-sizing:border-box;background:linear-gradient(160deg,#f5f8fd,#e9f0f9);border:5px solid #dfe6ee;border-radius:10px;"></div><div class="t " style="left:148.50px;top:206.22px;font-size:21px;line-height:21px;color:#2c4a6e;font-weight:700;transform-origin:0 0;transform:scaleX(1.2912);">Why this stance is prudent</div><div class="t " style="left:154.00px;top:264.92px;font-size:19px;line-height:19px;color:#2a323d;">•</div><div class="t " style="left:178.50px;top:264.92px;font-size:19px;line-height:19px;color:#2a323d;transform-origin:0 0;transform:scaleX(1.3658);">CD buyers usually prioritize principal stability, known yield and</div><div class="t " style="left:178.50px;top:298.92px;font-size:19px;line-height:19px;color:#2a323d;transform-origin:0 0;transform:scaleX(1.5151);">liquidity</div><div class="t " style="left:154.00px;top:334.92px;font-size:19px;line-height:19px;color:#2a323d;">•</div><div class="t " style="left:178.50px;top:334.92px;font-size:19px;line-height:19px;color:#2a323d;transform-origin:0 0;transform:scaleX(1.3713);">Variable annuities introduce market risk, layered fees, product</div><div class="t " style="left:178.50px;top:368.92px;font-size:19px;line-height:19px;color:#2a323d;transform-origin:0 0;transform:scaleX(1.3682);">complexity and surrender constraints.</div><div class="t " style="left:154.00px;top:399.92px;font-size:19px;line-height:19px;color:#2a323d;">•</div><div class="t " style="left:178.50px;top:399.92px;font-size:19px;line-height:19px;color:#2a323d;transform-origin:0 0;transform:scaleX(1.3502);">A replacement should be rare unless there is a documented, client-</div><div class="t " style="left:178.50px;top:434.92px;font-size:19px;line-height:19px;color:#2a323d;transform-origin:0 0;transform:scaleX(1.3650);">specific need for annuity-only features.</div><div class="t " style="left:154.00px;top:469.92px;font-size:19px;line-height:19px;color:#2a323d;">•</div><div class="t " style="left:178.50px;top:469.92px;font-size:19px;line-height:19px;color:#2a323d;transform-origin:0 0;transform:scaleX(1.3355);">If rationale centers on teaser rates, bonus offers or sales pressure,</div><div class="t " style="left:178.50px;top:504.92px;font-size:19px;line-height:19px;color:#2a323d;transform-origin:0 0;transform:scaleX(1.3433);">fiduciary risk is elevated.</div><div class="a" style="left:137px;top:755px;width:833px;height:236px;box-sizing:border-box;background:#ffffff;border:5px solid #dde3ea;border-radius:8px;"></div><div class="t " style="left:184.00px;top:786.92px;font-size:19px;line-height:19px;color:#1c8a74;font-weight:700;transform-origin:0 0;transform:scaleX(1.2003);">Fiduciary test before any recommendation</div><div class="t " style="left:184.00px;top:868.76px;font-size:18px;line-height:18px;color:#2a323d;transform-origin:0 0;transform:scaleX(1.2776);">Can we clearly show that expected benefits outweigh additional costs,</div><div class="t " style="left:184.00px;top:898.76px;font-size:18px;line-height:18px;color:#2a323d;transform-origin:0 0;transform:scaleX(1.2891);">risk and loss of liquidity for this specific client?</div><div class="a" style="left:1068px;top:159px;width:828px;height:385px;box-sizing:border-box;background:linear-gradient(160deg,#fefaf0,#fcf1dc);border:5px solid #f4e4c2;border-radius:10px;"></div><div class="t " style="left:1117.00px;top:196.22px;font-size:21px;line-height:21px;color:#b57d12;font-weight:700;transform-origin:0 0;transform:scaleX(1.2134);">When a VA may be considered (exception path)</div><div class="t " style="left:1121.00px;top:260.61px;font-size:17px;line-height:17px;color:#2a323d;">•</div><div class="t " style="left:1139.00px;top:260.61px;font-size:17px;line-height:17px;color:#2a323d;transform-origin:0 0;transform:scaleX(1.3400);">Long time horizon and low odds of early withdrawals</div><div class="t " style="left:1121.00px;top:289.61px;font-size:17px;line-height:17px;color:#2a323d;">•</div><div class="t " style="left:1139.00px;top:289.61px;font-size:17px;line-height:17px;color:#2a323d;transform-origin:0 0;transform:scaleX(1.3480);">Client accepts market volatility and complex contract terms</div><div class="t " style="left:1121.00px;top:318.61px;font-size:17px;line-height:17px;color:#2a323d;">•</div><div class="t " style="left:1139.00px;top:318.61px;font-size:17px;line-height:17px;color:#2a323d;transform-origin:0 0;transform:scaleX(1.3713);">Need for annuitization/living benefit is explicit and documented</div><div class="t " style="left:1121.00px;top:347.61px;font-size:17px;line-height:17px;color:#2a323d;">•</div><div class="t " style="left:1139.00px;top:347.61px;font-size:17px;line-height:17px;color:#2a323d;transform-origin:0 0;transform:scaleX(1.3428);">Net benefit remains compelling after fees, surrender terms and taxes</div><div class="a" style="left:1068px;top:570px;width:828px;height:459px;box-sizing:border-box;background:#f6f8fb;border:5px solid #e0e5eb;border-radius:10px;"></div><div class="t " style="left:1117.00px;top:612.22px;font-size:21px;line-height:21px;color:#2c4a6e;font-weight:700;transform-origin:0 0;transform:scaleX(1.2405);">What to tell clients directly</div><div class="t " style="left:1117.00px;top:673.61px;font-size:17px;line-height:17px;color:#2a323d;transform-origin:0 0;transform:scaleX(1.4504);">"A variable annuity can provide income features, but it is not the</div><div class="t " style="left:1117.00px;top:703.61px;font-size:17px;line-height:17px;color:#2a323d;transform-origin:0 0;transform:scaleX(1.3396);">same as a CD. You give up FDIC-style deposit protection and take on</div><div class="t " style="left:1117.00px;top:733.61px;font-size:17px;line-height:17px;color:#2a323d;transform-origin:0 0;transform:scaleX(1.3754);">market risk, fees and potentially long surrender periods."</div><div class="t " style="left:1117.00px;top:904.61px;font-size:17px;line-height:17px;color:#7a828e;transform-origin:0 0;transform:scaleX(1.1454);">Document comparison, alternatives considered and why any principal-</div><div class="t " style="left:1117.00px;top:933.61px;font-size:17px;line-height:17px;color:#7a828e;transform-origin:0 0;transform:scaleX(0.9857);">protection needs are met.</div><div class="a" style="left:53px;top:1060px;width:1882px;height:5px;background:#e3e6ea;"></div><div class="t " style="left:68.00px;top:1076.76px;font-size:18px;line-height:18px;color:#7a828e;transform-origin:0 0;transform:scaleX(0.9147);">Source: standard FINRA/NAIC replacement guidance; product terms vary by contract.</div></div></div><div class="t " style="left:4.50px;top:602.75px;font-size:22.5px;line-height:22.5px;color:#505050;">3</div><div class="a" style="left:38.5px;top:601.5px;width:320px;height:180px;border-radius:6px;overflow:hidden;background:#fff;box-shadow:0 1px 3px rgba(0,0,0,0.15)"><div class="slide th" style="left:0;top:0;transform:scale(0.16097);transform-origin:0 0"><div class="a" style="left:0px;top:0px;width:1988px;height:113px;background:#0e1a2b;"></div><div class="t " style="left:75.00px;top:15.22px;font-size:34px;line-height:34px;color:#fff;font-weight:700;transform-origin:0 0;transform:scaleX(1.0048);">Feature Comparison: Certificates of Deposit vs. Variable Annuities</div><div class="a" style="left:71px;top:149px;width:348.5px;height:75.4px;background:#e6edf6;"></div><div class="a" style="left:419.5px;top:149px;width:737.0px;height:75.4px;background:#d6e6f9;"></div><div class="a" style="left:1156.5px;top:149px;width:739.5px;height:75.4px;background:#fce6d2;"></div><div class="a" style="left:71px;top:224.4px;width:1825px;height:116.6px;background:#ffffff;"></div><div class="a" style="left:71px;top:341px;width:1825px;height:111.19999999999999px;background:#f7f9fc;"></div><div class="a" style="left:71px;top:452.2px;width:1825px;height:112.09999999999997px;background:#ffffff;"></div><div class="a" style="left:71px;top:564.3px;width:1825px;height:106.0px;background:#f7f9fc;"></div><div class="a" style="left:71px;top:670.3px;width:1825px;height:119.10000000000002px;background:#ffffff;"></div><div class="a" style="left:71px;top:789.4px;width:1825px;height:119.20000000000005px;background:#f7f9fc;"></div><div class="a" style="left:71px;top:146px;width:1825px;height:6px;background:#d6dce4;"></div><div class="a" style="left:71px;top:221.4px;width:1825px;height:6px;background:#d6dce4;"></div><div class="a" style="left:71px;top:338px;width:1825px;height:6px;background:#d6dce4;"></div><div class="a" style="left:71px;top:449.2px;width:1825px;height:6px;background:#d6dce4;"></div><div class="a" style="left:71px;top:561.3px;width:1825px;height:6px;background:#d6dce4;"></div><div class="a" style="left:71px;top:667.3px;width:1825px;height:6px;background:#d6dce4;"></div><div class="a" style="left:71px;top:786.4px;width:1825px;height:6px;background:#d6dce4;"></div><div class="a" style="left:71px;top:905.6px;width:1825px;height:6px;background:#d6dce4;"></div><div class="a" style="left:68px;top:149px;width:6px;height:759.6px;background:#d6dce4;"></div><div class="a" style="left:416.5px;top:149px;width:6px;height:759.6px;background:#d6dce4;"></div><div class="a" style="left:1153.5px;top:149px;width:6px;height:759.6px;background:#d6dce4;"></div><div class="a" style="left:1893px;top:149px;width:6px;height:759.6px;background:#d6dce4;"></div><div class="t " style="left:199.25px;top:177.76px;font-size:18px;line-height:18px;color:#2a323d;font-weight:700;transform-origin:0 0;transform:scaleX(1.2269);">Attribute</div><div class="t " style="left:653.00px;top:177.76px;font-size:18px;line-height:18px;color:#2d5e9e;font-weight:700;transform-origin:0 0;transform:scaleX(1.2053);">Certificate of Deposit (CD)</div><div class="t " style="left:1412.25px;top:177.76px;font-size:18px;line-height:18px;color:#b45f10;font-weight:700;transform-origin:0 0;transform:scaleX(1.2595);">Variable Annuity (VA)</div><div class="t " style="left:95.00px;top:275.16px;font-size:16px;line-height:16px;color:#2a323d;font-weight:700;transform-origin:0 0;transform:scaleX(1.2394);">Principal risk / protection</div><div class="t " style="left:445.00px;top:261.00px;font-size:15px;line-height:15px;color:#3a4350;transform-origin:0 0;transform:scaleX(1.3170);">Bank deposit principal with interest rate; FDIC insurance applies subject to</div><div class="t " style="left:445.00px;top:287.00px;font-size:15px;line-height:15px;color:#3a4350;transform-origin:0 0;transform:scaleX(0.7827);">limits.</div><div class="t " style="left:1182.00px;top:276.00px;font-size:15px;line-height:15px;color:#3a4350;transform-origin:0 0;transform:scaleX(1.3393);">Investment value fluctuates with subaccount performance; not FDIC insured.</div><div class="t " style="left:95.00px;top:389.06px;font-size:16px;line-height:16px;color:#2a323d;font-weight:700;transform-origin:0 0;transform:scaleX(1.2144);">Return driver</div><div class="t " style="left:445.00px;top:389.90px;font-size:15px;line-height:15px;color:#3a4350;transform-origin:0 0;transform:scaleX(1.3365);">Known APY through maturity.</div><div class="t " style="left:1182.00px;top:389.90px;font-size:15px;line-height:15px;color:#3a4350;transform-origin:0 0;transform:scaleX(1.1661);">Market-linked returns reduced by expenses; fee load over long horizons.</div><div class="t " style="left:95.00px;top:500.71px;font-size:16px;line-height:16px;color:#2a323d;font-weight:700;transform-origin:0 0;transform:scaleX(1.2753);">Liquidity</div><div class="t " style="left:445.00px;top:501.55px;font-size:15px;line-height:15px;color:#3a4350;transform-origin:0 0;transform:scaleX(1.1594);">Early withdrawal penalty usually a set number of months of interest.</div><div class="t " style="left:1182.00px;top:486.55px;font-size:15px;line-height:15px;color:#3a4350;transform-origin:0 0;transform:scaleX(1.3092);">Surrender period and charges can last years; value may be lower when</div><div class="t " style="left:1182.00px;top:512.55px;font-size:15px;line-height:15px;color:#3a4350;transform-origin:0 0;transform:scaleX(1.2965);">liquidity is needed.</div><div class="t " style="left:95.00px;top:609.76px;font-size:16px;line-height:16px;color:#2a323d;font-weight:700;transform-origin:0 0;transform:scaleX(1.2176);">Complexity</div><div class="t " style="left:445.00px;top:610.60px;font-size:15px;line-height:15px;color:#3a4350;transform-origin:0 0;transform:scaleX(1.3140);">Simple terms and transparent yield.</div><div class="t " style="left:1182.00px;top:610.60px;font-size:15px;line-height:15px;color:#3a4350;transform-origin:0 0;transform:scaleX(1.2245);">Complex contract features, riders and multiple expense structures.</div><div class="t " style="left:95.00px;top:722.31px;font-size:16px;line-height:16px;color:#2a323d;font-weight:700;transform-origin:0 0;transform:scaleX(1.1313);">Income/annuitization</div><div class="t " style="left:445.00px;top:723.15px;font-size:15px;line-height:15px;color:#3a4350;transform-origin:0 0;transform:scaleX(1.3874);">No built-in lifetime payout feature.</div><div class="t " style="left:1182.00px;top:723.15px;font-size:15px;line-height:15px;color:#3a4350;transform-origin:0 0;transform:scaleX(1.3145);">Can annuitize or add living income riders (extra cost/conditions).</div><div class="t " style="left:95.00px;top:841.46px;font-size:16px;line-height:16px;color:#2a323d;font-weight:700;transform-origin:0 0;transform:scaleX(1.3015);">Tax treatment</div><div class="t " style="left:445.00px;top:842.30px;font-size:15px;line-height:15px;color:#3a4350;transform-origin:0 0;transform:scaleX(1.3436);">Interest generally taxable annually in non-qualified accounts.</div><div class="t " style="left:1182.00px;top:827.30px;font-size:15px;line-height:15px;color:#3a4350;transform-origin:0 0;transform:scaleX(1.3448);">Tax-deferred growth; withdrawals generally taxed as ordinary income;</div><div class="t " style="left:1182.00px;top:853.30px;font-size:15px;line-height:15px;color:#3a4350;transform-origin:0 0;transform:scaleX(1.2370);">penalties may apply by age.</div><div class="a" style="left:71px;top:926px;width:1858px;height:133px;box-sizing:border-box;background:#fdf3e3;border:5px solid #f2d7ab;border-radius:6px;"></div><div class="t " style="left:119.00px;top:975.61px;font-size:17px;line-height:17px;color:#7a4e0e;font-weight:700;transform-origin:0 0;transform:scaleX(1.1233);">FINRA investor cautions: high-yield CD promotions can become an on-ramp for high-commission annuity sales; advisors should clearly distinguish FDIC-insured bank products from complex</div><div class="t " style="left:119.00px;top:1005.61px;font-size:17px;line-height:17px;color:#7a4e0e;font-weight:700;transform-origin:0 0;transform:scaleX(1.1612);">annuity contracts.</div><div class="t " style="left:68.00px;top:1078.46px;font-size:16px;line-height:16px;color:#7a828e;transform-origin:0 0;transform:scaleX(1.1060);">Sources: SEC/FINRA investor bulletins; illustrative summary only.</div></div></div><div class="t " style="left:4.50px;top:813.25px;font-size:22.5px;line-height:22.5px;color:#505050;">4</div><div class="a" style="left:38.5px;top:812px;width:320px;height:180px;border-radius:6px;overflow:hidden;background:#fff;box-shadow:0 1px 3px rgba(0,0,0,0.15)"><div class="slide th" style="left:0;top:0;transform:scale(0.16097);transform-origin:0 0"><div class="a" style="left:0px;top:0px;width:1988px;height:113px;background:#0e1a2b;"></div><div class="t " style="left:75.00px;top:16.22px;font-size:34px;line-height:34px;color:#fff;font-weight:700;transform-origin:0 0;transform:scaleX(1.0101);">Risk/Return and Growth Effect: Fee Drag and Sequence Risk Matter</div><div class="a" style="left:75px;top:144px;width:1232px;height:894px;box-sizing:border-box;background:#ffffff;border:5px solid #e1e5ea;border-radius:8px;"></div><svg class="a" style="left:0;top:0" width="1988" height="1119"><line x1="216" y1="214.3" x2="1223" y2="214.3" stroke="#808080" stroke-width="6"/><line x1="216" y1="294.6" x2="1223" y2="294.6" stroke="#808080" stroke-width="6"/><line x1="216" y1="369.7" x2="1223" y2="369.7" stroke="#808080" stroke-width="6"/><line x1="216" y1="444.7" x2="1223" y2="444.7" stroke="#808080" stroke-width="6"/><line x1="216" y1="521.5" x2="1223" y2="521.5" stroke="#808080" stroke-width="6"/><line x1="216" y1="598.3" x2="1223" y2="598.3" stroke="#808080" stroke-width="6"/><line x1="216" y1="676" x2="1223" y2="676" stroke="#808080" stroke-width="6"/><line x1="216" y1="752.8" x2="1223" y2="752.8" stroke="#808080" stroke-width="6"/><line x1="221" y1="212" x2="221" y2="755" stroke="#808080" stroke-width="6"/><polyline points="251.8,638.0 314.5,620.7 377.1,602.6 439.8,583.8 502.4,564.0 565.1,543.4 627.8,521.9 690.4,499.4 753.1,475.8 815.7,451.3 878.4,425.6 941.1,398.7 1003.7,370.7 1066.4,341.4 1129.0,310.7 1191.7,278.7" fill="none" stroke="#5a9a62" stroke-width="6"/><polyline points="251.8,638.0 314.5,621.8 377.1,605.0 439.8,587.5 502.4,569.2 565.1,550.1 627.8,530.3 690.4,509.6 753.1,488.0 815.7,465.6 878.4,442.2 941.1,417.8 1003.7,392.4 1066.4,365.9 1129.0,338.3 1191.7,309.6" fill="none" stroke="#3d6fa6" stroke-width="6"/><polyline points="251.8,638.0 314.5,714.0 377.1,701.8 439.8,689.1 502.4,675.7 565.1,661.6 627.8,646.8 690.4,631.3 753.1,615.0 815.7,597.8 878.4,579.9 941.1,561.0 1003.7,541.2 1066.4,520.4 1129.0,498.5 1191.7,475.6" fill="none" stroke="#c4506c" stroke-width="6"/><line x1="305" y1="812" x2="345" y2="812" stroke="#3d6fa6" stroke-width="4"/><line x1="525" y1="812" x2="565" y2="812" stroke="#5a9a62" stroke-width="4"/><line x1="795" y1="812" x2="835" y2="812" stroke="#c4506c" stroke-width="4"/></svg><div class="t " style="left:146.00px;top:208.45px;font-size:14px;line-height:14px;color:#555;transform-origin:0 0;transform:scaleX(1.2202);">200000</div><div class="t " style="left:146.00px;top:288.75px;font-size:14px;line-height:14px;color:#555;transform-origin:0 0;transform:scaleX(1.2202);">180000</div><div class="t " style="left:146.00px;top:363.85px;font-size:14px;line-height:14px;color:#555;transform-origin:0 0;transform:scaleX(1.2202);">160000</div><div class="t " style="left:146.00px;top:438.85px;font-size:14px;line-height:14px;color:#555;transform-origin:0 0;transform:scaleX(1.2202);">140000</div><div class="t " style="left:146.00px;top:515.65px;font-size:14px;line-height:14px;color:#555;transform-origin:0 0;transform:scaleX(1.2202);">120000</div><div class="t " style="left:146.00px;top:592.45px;font-size:14px;line-height:14px;color:#555;transform-origin:0 0;transform:scaleX(1.2202);">100000</div><div class="t " style="left:155.50px;top:670.15px;font-size:14px;line-height:14px;color:#555;transform-origin:0 0;transform:scaleX(1.2202);">90000</div><div class="t " style="left:155.50px;top:746.95px;font-size:14px;line-height:14px;color:#555;transform-origin:0 0;transform:scaleX(1.2202);">75000</div><div class="t " style="left:251.80px;top:768.15px;font-size:14px;line-height:14px;color:#555;transform:translateX(-50%);">0</div><div class="t " style="left:314.46px;top:768.15px;font-size:14px;line-height:14px;color:#555;transform:translateX(-50%);">1</div><div class="t " style="left:377.12px;top:768.15px;font-size:14px;line-height:14px;color:#555;transform:translateX(-50%);">2</div><div class="t " style="left:439.78px;top:768.15px;font-size:14px;line-height:14px;color:#555;transform:translateX(-50%);">3</div><div class="t " style="left:502.44px;top:768.15px;font-size:14px;line-height:14px;color:#555;transform:translateX(-50%);">4</div><div class="t " style="left:565.10px;top:768.15px;font-size:14px;line-height:14px;color:#555;transform:translateX(-50%);">5</div><div class="t " style="left:627.76px;top:768.15px;font-size:14px;line-height:14px;color:#555;transform:translateX(-50%);">6</div><div class="t " style="left:690.42px;top:768.15px;font-size:14px;line-height:14px;color:#555;transform:translateX(-50%);">7</div><div class="t " style="left:753.08px;top:768.15px;font-size:14px;line-height:14px;color:#555;transform:translateX(-50%);">8</div><div class="t " style="left:815.74px;top:768.15px;font-size:14px;line-height:14px;color:#555;transform:translateX(-50%);">9</div><div class="t " style="left:878.40px;top:768.15px;font-size:14px;line-height:14px;color:#555;transform:translateX(-50%);">10</div><div class="t " style="left:941.06px;top:768.15px;font-size:14px;line-height:14px;color:#555;transform:translateX(-50%);">11</div><div class="t " style="left:1003.72px;top:768.15px;font-size:14px;line-height:14px;color:#555;transform:translateX(-50%);">12</div><div class="t " style="left:1066.38px;top:768.15px;font-size:14px;line-height:14px;color:#555;transform:translateX(-50%);">13</div><div class="t " style="left:1129.04px;top:768.15px;font-size:14px;line-height:14px;color:#555;transform:translateX(-50%);">14</div><div class="t " style="left:1191.70px;top:768.15px;font-size:14px;line-height:14px;color:#555;transform:translateX(-50%);">15</div><div class="t " style="left:348.00px;top:806.15px;font-size:14px;line-height:14px;color:#555;transform-origin:0 0;transform:scaleX(1.2021);">CD ladder (4.0%)</div><div class="t " style="left:568.00px;top:806.15px;font-size:14px;line-height:14px;color:#555;transform-origin:0 0;transform:scaleX(1.5064);">VA expected net (4.2%)</div><div class="t " style="left:838.00px;top:806.15px;font-size:14px;line-height:14px;color:#555;transform-origin:0 0;transform:scaleX(1.4667);">VA w/ seq. - 20% Y1 loss 4.5%</div><div class="t " style="left:143.00px;top:874.76px;font-size:18px;line-height:18px;color:#2a323d;font-weight:700;transform-origin:0 0;transform:scaleX(1.1414);">Illustrative outcomes at year 15</div><div class="t " style="left:143.00px;top:922.30px;font-size:15px;line-height:15px;color:#555;transform-origin:0 0;transform:scaleX(1.3052);">CD: $181,628    VA expected: $185,380    VA w/seq: $161,474</div><div class="a" style="left:1335px;top:144px;width:599px;height:358px;box-sizing:border-box;background:linear-gradient(160deg,#f1f6fd,#e6eef9);border:5px solid #dbe5f1;border-radius:8px;"></div><div class="t " style="left:1389.00px;top:188.92px;font-size:19px;line-height:19px;color:#2c4a6e;font-weight:700;transform-origin:0 0;transform:scaleX(1.1532);">Assumptions used</div><div class="t " style="left:1388.00px;top:244.30px;font-size:15px;line-height:15px;color:#2a323d;">•</div><div class="t " style="left:1404.00px;top:244.30px;font-size:15px;line-height:15px;color:#2a323d;transform-origin:0 0;transform:scaleX(1.3788);">$100,000 starting value</div><div class="t " style="left:1388.00px;top:270.80px;font-size:15px;line-height:15px;color:#2a323d;">•</div><div class="t " style="left:1404.00px;top:270.80px;font-size:15px;line-height:15px;color:#2a323d;transform-origin:0 0;transform:scaleX(1.4392);">CD ladder: constant 4.0% annual rate</div><div class="t " style="left:1388.00px;top:297.30px;font-size:15px;line-height:15px;color:#2a323d;">•</div><div class="t " style="left:1404.00px;top:297.30px;font-size:15px;line-height:15px;color:#2a323d;transform-origin:0 0;transform:scaleX(1.3926);">VA gross 6.0%, less 2.5% average annual costs</div><div class="t " style="left:1388.00px;top:323.80px;font-size:15px;line-height:15px;color:#2a323d;">•</div><div class="t " style="left:1404.00px;top:323.80px;font-size:15px;line-height:15px;color:#2a323d;transform-origin:0 0;transform:scaleX(1.3718);">Stress case includes early bear market drawdown</div><div class="a" style="left:1335px;top:530px;width:599px;height:511px;box-sizing:border-box;background:linear-gradient(160deg,#fdf6ef,#fcefe3);border:5px solid #f4dfcc;border-radius:8px;"></div><div class="t " style="left:1389.00px;top:581.92px;font-size:19px;line-height:19px;color:#c0651c;font-weight:700;transform-origin:0 0;transform:scaleX(1.2152);">Advisory interpretation</div><div class="t " style="left:1388.00px;top:630.30px;font-size:15px;line-height:15px;color:#2a323d;">•</div><div class="t " style="left:1408.00px;top:630.30px;font-size:15px;line-height:15px;color:#2a323d;transform-origin:0 0;transform:scaleX(1.3669);">Higher gross returns does not guarantee higher net</div><div class="t " style="left:1408.00px;top:659.30px;font-size:15px;line-height:15px;color:#2a323d;transform-origin:0 0;transform:scaleX(1.5344);">accumulation.</div><div class="t " style="left:1388.00px;top:686.30px;font-size:15px;line-height:15px;color:#2a323d;">•</div><div class="t " style="left:1408.00px;top:686.30px;font-size:15px;line-height:15px;color:#2a323d;transform-origin:0 0;transform:scaleX(1.3839);">Fees can absorb much of the expected equity</div><div class="t " style="left:1408.00px;top:715.30px;font-size:15px;line-height:15px;color:#2a323d;transform-origin:0 0;transform:scaleX(1.4078);">premium.</div><div class="t " style="left:1388.00px;top:741.30px;font-size:15px;line-height:15px;color:#2a323d;">•</div><div class="t " style="left:1408.00px;top:741.30px;font-size:15px;line-height:15px;color:#2a323d;transform-origin:0 0;transform:scaleX(1.4047);">Early drawdowns can permanently lower wealth</div><div class="t " style="left:1408.00px;top:769.30px;font-size:15px;line-height:15px;color:#2a323d;transform-origin:0 0;transform:scaleX(1.4133);">and future income flexibility.</div><div class="t " style="left:1388.00px;top:796.30px;font-size:15px;line-height:15px;color:#2a323d;">•</div><div class="t " style="left:1408.00px;top:796.30px;font-size:15px;line-height:15px;color:#2a323d;transform-origin:0 0;transform:scaleX(1.3841);">A conservative CD client may not be willing or</div><div class="t " style="left:1408.00px;top:823.30px;font-size:15px;line-height:15px;color:#2a323d;transform-origin:0 0;transform:scaleX(1.3974);">able to bear this path risk.</div><div class="t " style="left:68.00px;top:1078.46px;font-size:16px;line-height:16px;color:#7a828e;transform-origin:0 0;transform:scaleX(1.0327);">Illustrative only; not a forecast. Actual returns and costs will vary by product and market conditions.</div></div></div><div class="t " style="left:4.50px;top:1023.25px;font-size:22.5px;line-height:22.5px;color:#505050;">5</div><div class="a" style="left:38.5px;top:1022px;width:320px;height:180px;border-radius:6px;overflow:hidden;background:#fff;box-shadow:0 1px 3px rgba(0,0,0,0.15)"><div class="slide th" style="left:0;top:0;transform:scale(0.16097);transform-origin:0 0"><div class="a" style="left:0px;top:0px;width:1988px;height:119px;background:#0e1a2b;"></div><div class="t cal" style="left:83.00px;top:29.82px;font-size:34px;line-height:34px;color:#ffffff;font-weight:700;transform-origin:0 0;transform:scaleX(0.9940);">Penalty and Liquidity Comparison: Cost of Getting Out Early</div><div class="a" style="left:82.5px;top:162px;width:1117.5px;height:870px;box-sizing:border-box;border:5px solid #d6d9dd;border-radius:8px;background:#fdfefe;"></div><svg class="a" style="left:0;top:0" width="1988" height="1119"><line x1="217.8" y1="258.70" x2="1124.5" y2="258.70" stroke="#7a7a7a" stroke-width="6"/><line x1="217.8" y1="352.17" x2="1124.5" y2="352.17" stroke="#7a7a7a" stroke-width="6"/><line x1="217.8" y1="445.64" x2="1124.5" y2="445.64" stroke="#7a7a7a" stroke-width="6"/><line x1="217.8" y1="539.11" x2="1124.5" y2="539.11" stroke="#7a7a7a" stroke-width="6"/><line x1="217.8" y1="632.58" x2="1124.5" y2="632.58" stroke="#7a7a7a" stroke-width="6"/><line x1="217.8" y1="726.05" x2="1124.5" y2="726.05" stroke="#7a7a7a" stroke-width="6"/><line x1="217.8" y1="819.52" x2="1124.5" y2="819.52" stroke="#7a7a7a" stroke-width="6"/><line x1="223.4" y1="257.70" x2="223.4" y2="825.52" stroke="#7a7a7a" stroke-width="6"/><line x1="223.40" y1="819.52" x2="223.40" y2="825.52" stroke="#7a7a7a" stroke-width="6"/><line x1="448.68" y1="819.52" x2="448.68" y2="825.52" stroke="#7a7a7a" stroke-width="6"/><line x1="673.95" y1="819.52" x2="673.95" y2="825.52" stroke="#7a7a7a" stroke-width="6"/><line x1="899.23" y1="819.52" x2="899.23" y2="825.52" stroke="#7a7a7a" stroke-width="6"/><line x1="1124.50" y1="819.52" x2="1124.50" y2="825.52" stroke="#7a7a7a" stroke-width="6"/><rect x="291.04" y="749.42" width="90" height="70.10" fill="#2f7d32"/><rect x="516.31" y="632.58" width="90" height="186.94" fill="#2f7d32"/><rect x="741.59" y="601.42" width="90" height="218.10" fill="#2f7d32"/><rect x="966.86" y="289.86" width="90" height="529.66" fill="#2f7d32"/></svg><div class="t " style="left:207.50px;top:248.42px;font-size:19px;line-height:19px;color:#000;transform:translateX(-100%);">18000</div><div class="t " style="left:207.50px;top:341.89px;font-size:19px;line-height:19px;color:#000;transform:translateX(-100%);">15000</div><div class="t " style="left:207.50px;top:435.36px;font-size:19px;line-height:19px;color:#000;transform:translateX(-100%);">12000</div><div class="t " style="left:207.50px;top:528.83px;font-size:19px;line-height:19px;color:#000;transform:translateX(-100%);">9000</div><div class="t " style="left:207.50px;top:622.30px;font-size:19px;line-height:19px;color:#000;transform:translateX(-100%);">6000</div><div class="t " style="left:207.50px;top:715.77px;font-size:19px;line-height:19px;color:#000;transform:translateX(-100%);">3000</div><div class="t " style="left:207.50px;top:809.24px;font-size:19px;line-height:19px;color:#000;transform:translateX(-100%);">0</div><div class="t " style="left:336.04px;top:833.67px;font-size:20px;line-height:20px;color:#000;transform:translateX(-50%);">CD early</div><div class="t " style="left:336.04px;top:857.57px;font-size:20px;line-height:20px;color:#000;transform:translateX(-50%);">withdrawal</div><div class="t " style="left:561.31px;top:833.67px;font-size:20px;line-height:20px;color:#000;transform:translateX(-50%);">VA surrender</div><div class="t " style="left:561.31px;top:857.57px;font-size:20px;line-height:20px;color:#000;transform:translateX(-50%);">charge</div><div class="t " style="left:786.59px;top:833.67px;font-size:20px;line-height:20px;color:#000;transform:translateX(-50%);">VA surrender</div><div class="t " style="left:786.59px;top:857.57px;font-size:20px;line-height:20px;color:#000;transform:translateX(-50%);">+ tax penalty</div><div class="t " style="left:1011.86px;top:833.67px;font-size:20px;line-height:20px;color:#000;transform:translateX(-50%);">VA total early</div><div class="t " style="left:1011.86px;top:857.57px;font-size:20px;line-height:20px;color:#000;transform:translateX(-50%);">exit impact*</div><div class="t cal" style="left:150.00px;top:922.09px;font-size:19.5px;line-height:19.5px;color:#6c7076;transform-origin:0 0;transform:scaleX(0.9150);">*VA total early exit impact assumes year-2 liquidation with 6% surrender charge, 10% tax penalty on $10k gains (if under 59½),</div><div class="t cal" style="left:150.00px;top:946.09px;font-size:19.5px;line-height:19.5px;color:#6c7076;transform-origin:0 0;transform:scaleX(0.9127);">and 10% market decline at exit.</div><div class="a" style="left:1230px;top:162px;width:659px;height:403px;box-sizing:border-box;border:5px solid #bcdec8;border-radius:11px;background:#eefcf2;"></div><div class="t cal" style="left:1285.00px;top:208.57px;font-size:26.5px;line-height:26.5px;color:#2e7d32;font-weight:700;transform-origin:0 0;transform:scaleX(0.8996);">How penalties differ</div><div class="t cal" style="left:1285.50px;top:262.10px;font-size:21.5px;line-height:21.5px;color:#222c34;">•</div><div class="t cal" style="left:1307.50px;top:262.10px;font-size:21.5px;line-height:21.5px;color:#222c34;transform-origin:0 0;transform:scaleX(0.9813);">CD: penalty is generally explicit and contractually</div><div class="t cal" style="left:1307.50px;top:289.60px;font-size:21.5px;line-height:21.5px;color:#222c34;transform-origin:0 0;transform:scaleX(0.9982);">bounded.</div><div class="t cal" style="left:1285.50px;top:317.10px;font-size:21.5px;line-height:21.5px;color:#222c34;">•</div><div class="t cal" style="left:1307.50px;top:317.10px;font-size:21.5px;line-height:21.5px;color:#222c34;transform-origin:0 0;transform:scaleX(0.9654);">VA: charges can include surrender schedules and</div><div class="t cal" style="left:1307.50px;top:344.60px;font-size:21.5px;line-height:21.5px;color:#222c34;transform-origin:0 0;transform:scaleX(0.9933);">market-value effects.</div><div class="t cal" style="left:1285.50px;top:372.10px;font-size:21.5px;line-height:21.5px;color:#222c34;">•</div><div class="t cal" style="left:1307.50px;top:372.10px;font-size:21.5px;line-height:21.5px;color:#222c34;transform-origin:0 0;transform:scaleX(0.9697);">Tax penalties can apply depending on age and</div><div class="t cal" style="left:1307.50px;top:399.60px;font-size:21.5px;line-height:21.5px;color:#222c34;transform-origin:0 0;transform:scaleX(1.0241);">withdrawal structure.</div><div class="t cal" style="left:1285.50px;top:427.10px;font-size:21.5px;line-height:21.5px;color:#222c34;">•</div><div class="t cal" style="left:1307.50px;top:427.10px;font-size:21.5px;line-height:21.5px;color:#222c34;transform-origin:0 0;transform:scaleX(0.9802);">Exchange recommendations can restart surrender</div><div class="t cal" style="left:1307.50px;top:454.60px;font-size:21.5px;line-height:21.5px;color:#222c34;transform-origin:0 0;transform:scaleX(0.9806);">periods.</div><div class="a" style="left:1229.5px;top:600px;width:659px;height:432px;box-sizing:border-box;border:5px solid #f0c4cc;border-radius:11px;background:#fdf3f5;"></div><div class="t cal" style="left:1285.00px;top:644.94px;font-size:25.7px;line-height:25.7px;color:#a51d32;font-weight:700;transform-origin:0 0;transform:scaleX(0.9078);">Advisor talking point</div><div class="t cal" style="left:1285.00px;top:700.08px;font-size:22px;line-height:22px;color:#222c34;font-style:italic;transform-origin:0 0;transform:scaleX(1.0196);">“A CD penalty is usually a known interest give-up. An</div><div class="t cal" style="left:1285.00px;top:730.28px;font-size:22px;line-height:22px;color:#222c34;font-style:italic;transform-origin:0 0;transform:scaleX(1.0363);">annuity exit can involve a surrender charge, potential</div><div class="t cal" style="left:1285.00px;top:760.48px;font-size:22px;line-height:22px;color:#222c34;font-style:italic;transform-origin:0 0;transform:scaleX(1.0279);">tax penalty and possible market loss all at once.”</div><div class="t cal" style="left:1285.00px;top:920.60px;font-size:21.5px;line-height:21.5px;color:#6c7076;transform-origin:0 0;transform:scaleX(0.9741);">This distinction should be front-and-center in suitability</div><div class="t cal" style="left:1285.00px;top:945.80px;font-size:21.5px;line-height:21.5px;color:#6c7076;transform-origin:0 0;transform:scaleX(0.9137);">discussions.</div><div class="a" style="left:53px;top:1061px;width:1882px;height:6px;background:#dfe2e6;"></div><div class="t cal" style="left:75.00px;top:1077.46px;font-size:18px;line-height:18px;color:#6c7076;transform-origin:0 0;transform:scaleX(0.9167);">Penalty assumptions for training illustration only; actual product terms may vary.</div></div></div><div class="t " style="left:4.50px;top:1234.25px;font-size:22.5px;line-height:22.5px;color:#505050;">6</div><div class="a" style="left:38.5px;top:1233px;width:320px;height:180px;border-radius:6px;overflow:hidden;background:#fff;box-shadow:0 1px 3px rgba(0,0,0,0.15)"><div class="slide th" style="left:0;top:0;transform:scale(0.16097);transform-origin:0 0"><div class="a" style="left:0px;top:0px;width:1988px;height:113px;background:#0e1a2b;"></div><div class="t " style="left:75.00px;top:18.22px;font-size:34px;line-height:34px;color:#fff;font-weight:700;transform-origin:0 0;transform:scaleX(0.9946);">Risk Tolerance and Suitability: Align Product Choice to Client Profile</div><div class="a" style="left:75px;top:157px;width:1089px;height:903px;box-sizing:border-box;background:#ffffff;border:5px solid #e4e7eb;border-radius:8px;"></div><div class="t " style="left:452.00px;top:205.30px;font-size:15px;line-height:15px;color:#7a828e;transform-origin:0 0;transform:scaleX(1.2694);">Liquidity Need (left: low  →  right: high)</div><div class="a" style="left:149px;top:249px;width:491px;height:349px;background:#e5f5eb;border:1.5px solid #e0d8c4;box-sizing:border-box;"></div><div class="a" style="left:640px;top:249px;width:483px;height:349px;background:#fdf5e5;border:1.5px solid #ecdcc0;box-sizing:border-box;"></div><div class="a" style="left:149px;top:598px;width:491px;height:470px;background:#eaf2fb;border:1.5px solid #dfe3ea;box-sizing:border-box;"></div><div class="a" style="left:640px;top:598px;width:483px;height:470px;background:#fbeaea;border:1.5px solid #eddcdc;box-sizing:border-box;"></div><div class="t " style="left:193.00px;top:312.46px;font-size:16px;line-height:16px;color:#2f5f3c;transform-origin:0 0;transform:scaleX(1.3803);">Potential VA fit</div><div class="t " style="left:193.00px;top:343.46px;font-size:16px;line-height:16px;color:#2f5f3c;transform-origin:0 0;transform:scaleX(1.3256);">(High tolerance, low liquidity need, long</div><div class="t " style="left:193.00px;top:368.46px;font-size:16px;line-height:16px;color:#2f5f3c;transform-origin:0 0;transform:scaleX(1.3495);">horizon)</div><div class="t " style="left:679.00px;top:312.46px;font-size:16px;line-height:16px;color:#7a5a1e;transform-origin:0 0;transform:scaleX(1.2788);">Risk mismatch</div><div class="t " style="left:679.00px;top:343.46px;font-size:16px;line-height:16px;color:#7a5a1e;transform-origin:0 0;transform:scaleX(1.3579);">(High liquidity need)</div><div class="a" style="left:108px;top:895px;width:500px;height:20px;transform:rotate(-90deg);transform-origin:0 0"><div class="t " style="left:0.00px;top:3.30px;font-size:15px;line-height:15px;color:#7a828e;transform-origin:0 0;transform:scaleX(1.8531);">Risk Tolerance (bottom: low → top: high)</div></div><div class="a" style="left:1218px;top:158px;width:677px;height:405px;box-sizing:border-box;background:linear-gradient(160deg,#f1f6fd,#e8f0fa);border:5px solid #dfe6ee;border-radius:8px;"></div><div class="t " style="left:1267.00px;top:202.92px;font-size:19px;line-height:19px;color:#2c4a6e;font-weight:700;transform-origin:0 0;transform:scaleX(1.2116);">Data required before recommendation</div><div class="t " style="left:1265.00px;top:263.30px;font-size:15px;line-height:15px;color:#2a323d;">•</div><div class="t " style="left:1287.00px;top:263.30px;font-size:15px;line-height:15px;color:#2a323d;transform-origin:0 0;transform:scaleX(1.3701);">Age, income, financial situation and needs</div><div class="t " style="left:1265.00px;top:293.30px;font-size:15px;line-height:15px;color:#2a323d;">•</div><div class="t " style="left:1287.00px;top:293.30px;font-size:15px;line-height:15px;color:#2a323d;transform-origin:0 0;transform:scaleX(1.3884);">Investment objectives and time horizon</div><div class="t " style="left:1265.00px;top:318.30px;font-size:15px;line-height:15px;color:#2a323d;">•</div><div class="t " style="left:1287.00px;top:318.30px;font-size:15px;line-height:15px;color:#2a323d;transform-origin:0 0;transform:scaleX(1.4344);">Liquidity needs, liquid net worth and risk tolerance</div><div class="t " style="left:1265.00px;top:344.30px;font-size:15px;line-height:15px;color:#2a323d;">•</div><div class="t " style="left:1287.00px;top:344.30px;font-size:15px;line-height:15px;color:#2a323d;transform-origin:0 0;transform:scaleX(1.3736);">Tax status and intended use of the annuity</div><div class="a" style="left:1218px;top:586px;width:677px;height:474px;box-sizing:border-box;background:linear-gradient(160deg,#fdf7ee,#fcf0e2);border:5px solid #f4dfc8;border-radius:8px;"></div><div class="t " style="left:1267.00px;top:628.92px;font-size:19px;line-height:19px;color:#b5611a;font-weight:700;transform-origin:0 0;transform:scaleX(1.1686);">Red Flags for CD → VA replacement</div></div></div><div class="a" style="left:32.8px;top:1016.4px;width:331px;height:190.6px;box-sizing:border-box;border:5px solid #c0462a;border-radius:12px"></div><div class="slide" style="left:494.7px;top:199.4px;box-shadow:0 0 10px rgba(0,0,0,0.10);"><div class="a" style="left:0px;top:0px;width:1988px;height:119px;background:#0e1a2b;"></div><div class="t cal" style="left:83.00px;top:29.82px;font-size:34px;line-height:34px;color:#ffffff;font-weight:700;transform-origin:0 0;transform:scaleX(0.9940);">Penalty and Liquidity Comparison: Cost of Getting Out Early</div><div class="a" style="left:82.5px;top:162px;width:1117.5px;height:870px;box-sizing:border-box;border:2px solid #d6d9dd;border-radius:8px;background:#fdfefe;"></div><svg class="a" style="left:0;top:0" width="1988" height="1119"><line x1="217.8" y1="258.70" x2="1124.5" y2="258.70" stroke="#898989" stroke-width="2"/><line x1="217.8" y1="352.17" x2="1124.5" y2="352.17" stroke="#898989" stroke-width="2"/><line x1="217.8" y1="445.64" x2="1124.5" y2="445.64" stroke="#898989" stroke-width="2"/><line x1="217.8" y1="539.11" x2="1124.5" y2="539.11" stroke="#898989" stroke-width="2"/><line x1="217.8" y1="632.58" x2="1124.5" y2="632.58" stroke="#898989" stroke-width="2"/><line x1="217.8" y1="726.05" x2="1124.5" y2="726.05" stroke="#898989" stroke-width="2"/><line x1="217.8" y1="819.52" x2="1124.5" y2="819.52" stroke="#898989" stroke-width="2"/><line x1="223.4" y1="257.70" x2="223.4" y2="825.52" stroke="#898989" stroke-width="2"/><line x1="223.40" y1="819.52" x2="223.40" y2="825.52" stroke="#898989" stroke-width="2"/><line x1="448.68" y1="819.52" x2="448.68" y2="825.52" stroke="#898989" stroke-width="2"/><line x1="673.95" y1="819.52" x2="673.95" y2="825.52" stroke="#898989" stroke-width="2"/><line x1="899.23" y1="819.52" x2="899.23" y2="825.52" stroke="#898989" stroke-width="2"/><line x1="1124.50" y1="819.52" x2="1124.50" y2="825.52" stroke="#898989" stroke-width="2"/><rect x="291.04" y="749.42" width="90" height="70.10" fill="#2f7d32"/><rect x="516.31" y="632.58" width="90" height="186.94" fill="#2f7d32"/><rect x="741.59" y="601.42" width="90" height="218.10" fill="#2f7d32"/><rect x="966.86" y="289.86" width="90" height="529.66" fill="#2f7d32"/></svg><div class="t " style="left:207.50px;top:248.42px;font-size:19px;line-height:19px;color:#000;transform:translateX(-100%);">18000</div><div class="t " style="left:207.50px;top:341.89px;font-size:19px;line-height:19px;color:#000;transform:translateX(-100%);">15000</div><div class="t " style="left:207.50px;top:435.36px;font-size:19px;line-height:19px;color:#000;transform:translateX(-100%);">12000</div><div class="t " style="left:207.50px;top:528.83px;font-size:19px;line-height:19px;color:#000;transform:translateX(-100%);">9000</div><div class="t " style="left:207.50px;top:622.30px;font-size:19px;line-height:19px;color:#000;transform:translateX(-100%);">6000</div><div class="t " style="left:207.50px;top:715.77px;font-size:19px;line-height:19px;color:#000;transform:translateX(-100%);">3000</div><div class="t " style="left:207.50px;top:809.24px;font-size:19px;line-height:19px;color:#000;transform:translateX(-100%);">0</div><div class="t " style="left:336.04px;top:833.67px;font-size:20px;line-height:20px;color:#000;transform:translateX(-50%);">CD early</div><div class="t " style="left:336.04px;top:857.57px;font-size:20px;line-height:20px;color:#000;transform:translateX(-50%);">withdrawal</div><div class="t " style="left:561.31px;top:833.67px;font-size:20px;line-height:20px;color:#000;transform:translateX(-50%);">VA surrender</div><div class="t " style="left:561.31px;top:857.57px;font-size:20px;line-height:20px;color:#000;transform:translateX(-50%);">charge</div><div class="t " style="left:786.59px;top:833.67px;font-size:20px;line-height:20px;color:#000;transform:translateX(-50%);">VA surrender</div><div class="t " style="left:786.59px;top:857.57px;font-size:20px;line-height:20px;color:#000;transform:translateX(-50%);">+ tax penalty</div><div class="t " style="left:1011.86px;top:833.67px;font-size:20px;line-height:20px;color:#000;transform:translateX(-50%);">VA total early</div><div class="t " style="left:1011.86px;top:857.57px;font-size:20px;line-height:20px;color:#000;transform:translateX(-50%);">exit impact*</div><div class="t cal" style="left:150.00px;top:922.09px;font-size:19.5px;line-height:19.5px;color:#6c7076;transform-origin:0 0;transform:scaleX(0.9150);">*VA total early exit impact assumes year-2 liquidation with 6% surrender charge, 10% tax penalty on $10k gains (if under 59½),</div><div class="t cal" style="left:150.00px;top:946.09px;font-size:19.5px;line-height:19.5px;color:#6c7076;transform-origin:0 0;transform:scaleX(0.9127);">and 10% market decline at exit.</div><div class="a" style="left:1230px;top:162px;width:659px;height:403px;box-sizing:border-box;border:2px solid #bcdec8;border-radius:11px;background:#eefcf2;"></div><div class="t cal" style="left:1285.00px;top:208.57px;font-size:26.5px;line-height:26.5px;color:#2e7d32;font-weight:700;transform-origin:0 0;transform:scaleX(0.8996);">How penalties differ</div><div class="t cal" style="left:1285.50px;top:262.10px;font-size:21.5px;line-height:21.5px;color:#222c34;">•</div><div class="t cal" style="left:1307.50px;top:262.10px;font-size:21.5px;line-height:21.5px;color:#222c34;transform-origin:0 0;transform:scaleX(0.9813);">CD: penalty is generally explicit and contractually</div><div class="t cal" style="left:1307.50px;top:289.60px;font-size:21.5px;line-height:21.5px;color:#222c34;transform-origin:0 0;transform:scaleX(0.9982);">bounded.</div><div class="t cal" style="left:1285.50px;top:317.10px;font-size:21.5px;line-height:21.5px;color:#222c34;">•</div><div class="t cal" style="left:1307.50px;top:317.10px;font-size:21.5px;line-height:21.5px;color:#222c34;transform-origin:0 0;transform:scaleX(0.9654);">VA: charges can include surrender schedules and</div><div class="t cal" style="left:1307.50px;top:344.60px;font-size:21.5px;line-height:21.5px;color:#222c34;transform-origin:0 0;transform:scaleX(0.9933);">market-value effects.</div><div class="t cal" style="left:1285.50px;top:372.10px;font-size:21.5px;line-height:21.5px;color:#222c34;">•</div><div class="t cal" style="left:1307.50px;top:372.10px;font-size:21.5px;line-height:21.5px;color:#222c34;transform-origin:0 0;transform:scaleX(0.9697);">Tax penalties can apply depending on age and</div><div class="t cal" style="left:1307.50px;top:399.60px;font-size:21.5px;line-height:21.5px;color:#222c34;transform-origin:0 0;transform:scaleX(1.0241);">withdrawal structure.</div><div class="t cal" style="left:1285.50px;top:427.10px;font-size:21.5px;line-height:21.5px;color:#222c34;">•</div><div class="t cal" style="left:1307.50px;top:427.10px;font-size:21.5px;line-height:21.5px;color:#222c34;transform-origin:0 0;transform:scaleX(0.9802);">Exchange recommendations can restart surrender</div><div class="t cal" style="left:1307.50px;top:454.60px;font-size:21.5px;line-height:21.5px;color:#222c34;transform-origin:0 0;transform:scaleX(0.9806);">periods.</div><div class="a" style="left:1229.5px;top:600px;width:659px;height:432px;box-sizing:border-box;border:2px solid #f0c4cc;border-radius:11px;background:#fdf3f5;"></div><div class="t cal" style="left:1285.00px;top:644.94px;font-size:25.7px;line-height:25.7px;color:#a51d32;font-weight:700;transform-origin:0 0;transform:scaleX(0.9078);">Advisor talking point</div><div class="t cal" style="left:1285.00px;top:700.08px;font-size:22px;line-height:22px;color:#222c34;font-style:italic;transform-origin:0 0;transform:scaleX(1.0196);">“A CD penalty is usually a known interest give-up. An</div><div class="t cal" style="left:1285.00px;top:730.28px;font-size:22px;line-height:22px;color:#222c34;font-style:italic;transform-origin:0 0;transform:scaleX(1.0363);">annuity exit can involve a surrender charge, potential</div><div class="t cal" style="left:1285.00px;top:760.48px;font-size:22px;line-height:22px;color:#222c34;font-style:italic;transform-origin:0 0;transform:scaleX(1.0279);">tax penalty and possible market loss all at once.”</div><div class="t cal" style="left:1285.00px;top:920.60px;font-size:21.5px;line-height:21.5px;color:#6c7076;transform-origin:0 0;transform:scaleX(0.9741);">This distinction should be front-and-center in suitability</div><div class="t cal" style="left:1285.00px;top:945.80px;font-size:21.5px;line-height:21.5px;color:#6c7076;transform-origin:0 0;transform:scaleX(0.9137);">discussions.</div><div class="a" style="left:53px;top:1061px;width:1882px;height:2px;background:#dfe2e6;"></div><div class="t cal" style="left:75.00px;top:1077.46px;font-size:18px;line-height:18px;color:#6c7076;transform-origin:0 0;transform:scaleX(0.9167);">Penalty assumptions for training illustration only; actual product terms may vary.</div></div></body></html>
